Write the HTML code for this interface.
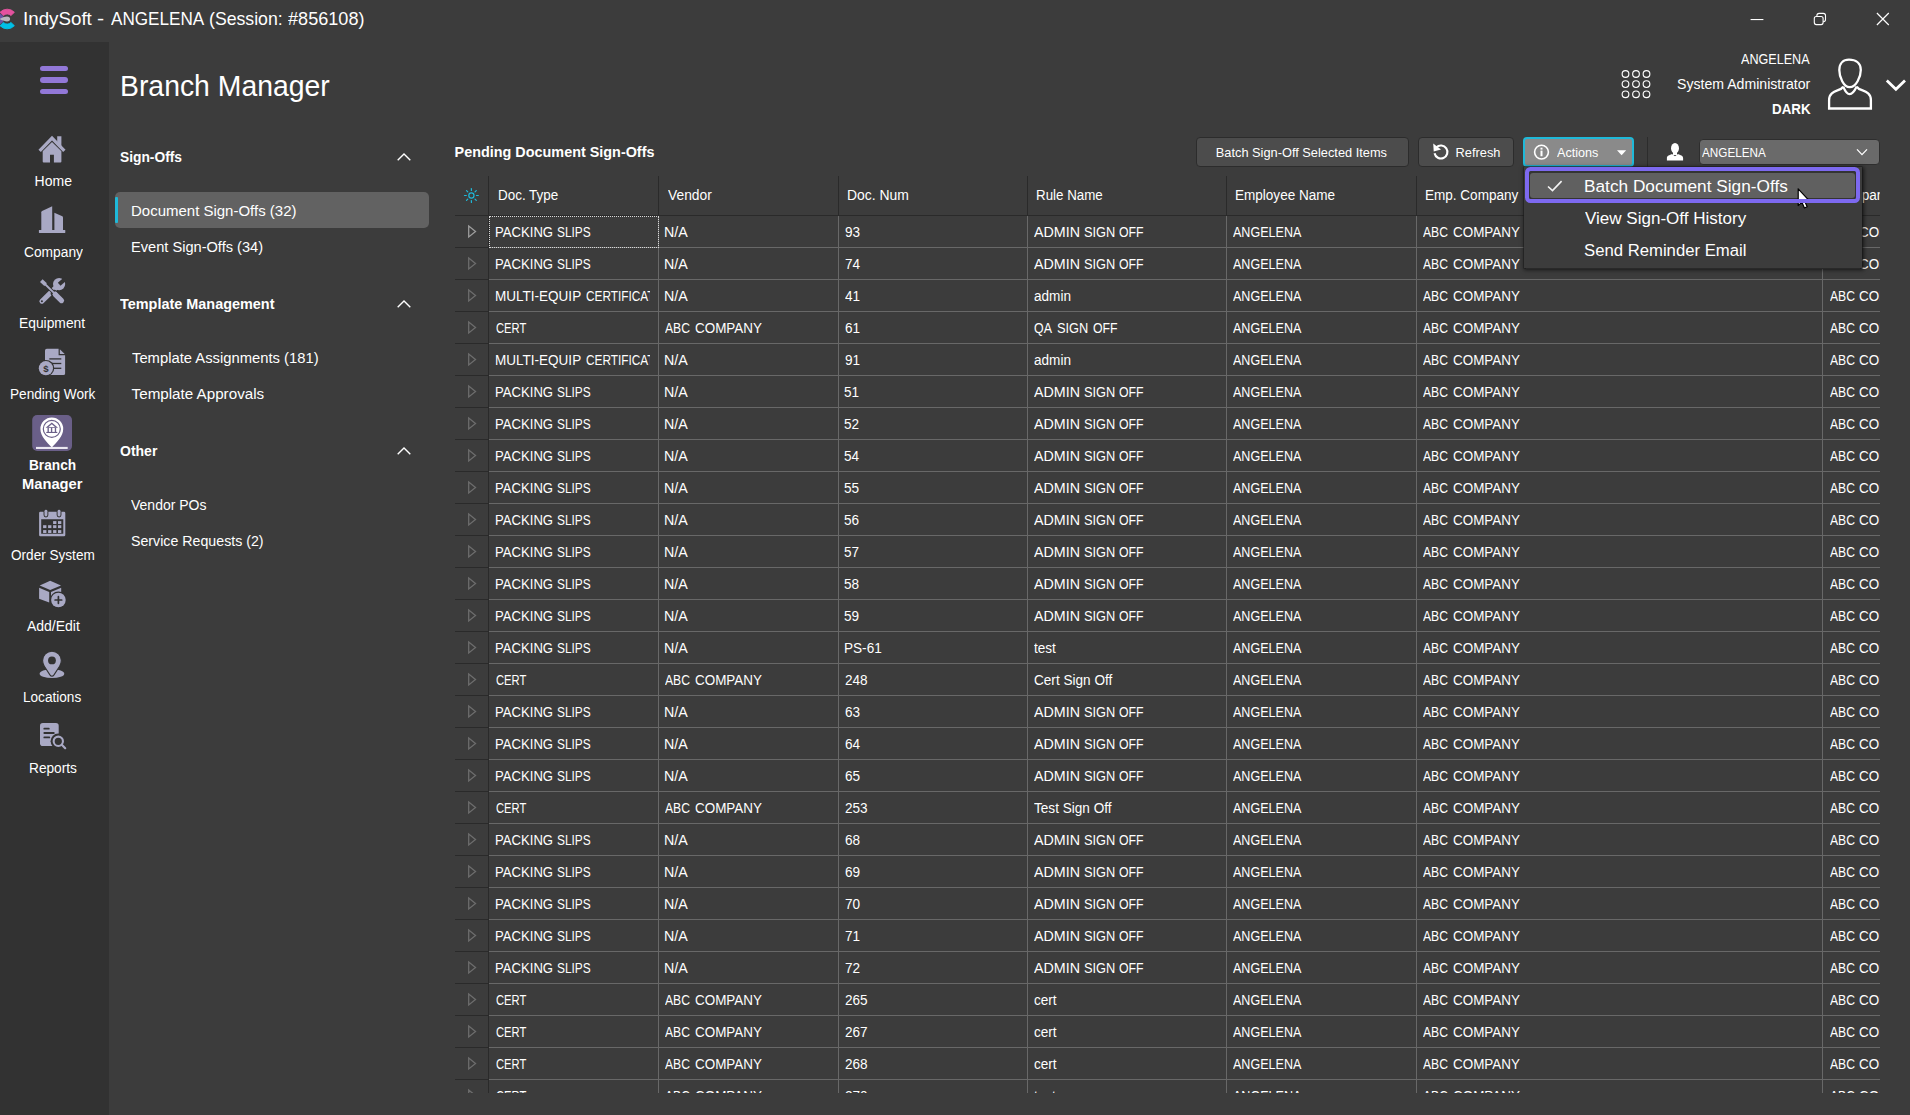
<!DOCTYPE html><html><head><meta charset="utf-8"><title>IndySoft - Branch Manager</title>
<style>html,body{margin:0;padding:0}body{width:1910px;height:1115px;overflow:hidden;position:relative;background:#3c3c3c;font-family:'Liberation Sans',sans-serif;color:#fff}svg{position:absolute;overflow:visible}.g{position:absolute;overflow:hidden}</style></head><body>
<div style="position:absolute;left:0px;top:42px;width:109px;height:1073px;background:#323232;"></div>
<svg style="left:0;top:0" width="24" height="42" viewBox="0 0 24 42"><path d="M0.03 12.32 A9.8 9.8 0 0 1 14.37 12.32 L10.93 15.52 A5.1 5.1 0 0 0 3.47 15.52 Z" fill="#e4529f" stroke="#e4529f" stroke-width="0.9" stroke-linejoin="round"/><path d="M14.37 25.68 A9.8 9.8 0 0 1 0.03 25.68 L3.47 22.48 A5.1 5.1 0 0 0 10.93 22.48 Z" fill="#00c0e6" stroke="#00c0e6" stroke-width="0.9" stroke-linejoin="round"/><path d="M-0.92 24.48 A9.8 9.8 0 0 1 -0.92 13.52 L2.97 16.15 A5.1 5.1 0 0 0 2.97 21.85 Z" fill="#6b55a8" stroke="#6b55a8" stroke-width="0.9" stroke-linejoin="round"/><path d="M-0.5 19 C2.5 17.6 5 16.6 7 16.6 C9 16.6 10.1 17.7 10.1 19 C10.1 20.3 9 21.4 7 21.4 C5 21.4 2.5 20.4 -0.5 19 Z" fill="#b9b8bf"/></svg>
<div style="position:absolute;left:40px;top:65.5px;width:28px;height:5.6px;background:#9278d8;border-radius:3px"></div>
<div style="position:absolute;left:40px;top:77px;width:28px;height:5.6px;background:#9278d8;border-radius:3px"></div>
<div style="position:absolute;left:40px;top:88.8px;width:28px;height:5.6px;background:#9278d8;border-radius:3px"></div>
<svg style="left:0;top:0" width="109" height="800" viewBox="0 0 109 800"><g fill="#a9a9c4"><path d="M57.2 136.2 H61.4 V147 L57.2 142.6 Z"/><path d="M52 141.9 L61.4 151.3 V161.6 Q61.4 162.6 60.4 162.6 H53.9 V154.7 H50 V162.6 H43.7 Q42.7 162.6 42.7 161.6 V151.3 Z"/></g><path d="M39.65 150.8 L52 138.1 L64.35 150.8" fill="none" stroke="#a9a9c4" stroke-width="3.3" stroke-linejoin="miter"/><g fill="#a9a9c4"><rect x="38.9" y="229.9" width="26.4" height="3" rx="0.4"/><path d="M41.3 230.5 V212.3 Q41.3 211.5 42.1 211.1 L52.2 206.2 V230.5 Z"/><path d="M54.4 230.5 V212.8 L62.3 216.3 Q63 216.7 63 217.5 V230.5 Z"/></g><g><path d="M41.9 301.2 L56.6 286.9" stroke="#a9a9c4" stroke-width="5" stroke-linecap="round" fill="none"/><circle cx="59.1" cy="284.1" r="6.1" fill="#a9a9c4"/><path d="M57.85 282.7 L60.55 285.75 L66.5 280.5 L63.8 277.4 Z" fill="#323232"/><circle cx="41.9" cy="301.2" r="1.05" fill="#323232"/><path d="M45 284 L61.5 300.5" stroke="#323232" stroke-width="3.8" fill="none"/><path d="M54.3 293.4 L61.5 300.6" stroke="#323232" stroke-width="7" stroke-linecap="round" fill="none"/><path d="M41.3 280.6 L45.6 284.7" stroke="#a9a9c4" stroke-width="3.7" fill="none"/><path d="M44.6 283.8 L55 293.9" stroke="#a9a9c4" stroke-width="1.9" fill="none"/><path d="M55.2 294.3 L61.5 300.6" stroke="#a9a9c4" stroke-width="5.2" stroke-linecap="round" fill="none"/><path d="M52.6 294.6 L55.8 291.4 L57.6 293.4 L54.6 296.5 Z" fill="#a9a9c4"/></g><path d="M46.8 348.8 H58.6 V355.3 H65.1 V373.4 Q65.1 375 63.5 375 H46.6 Q45 375 45 373.4 V350.6 Q45 348.8 46.8 348.8 Z" fill="#a9a9c4"/><path d="M59.8 349.2 L64.7 354.1 H59.8 Z" fill="#a9a9c4"/><rect x="49.3" y="358.25" width="12" height="1.3" fill="#323232"/><rect x="49.3" y="362.85" width="12" height="1.3" fill="#323232"/><rect x="49.3" y="367.65000000000003" width="12" height="1.3" fill="#323232"/><circle cx="45.9" cy="368.2" r="8.3" fill="#323232"/><circle cx="45.9" cy="368.2" r="7.1" fill="#a9a9c4"/><text x="45.9" y="371.7" text-anchor="middle" font-family="Liberation Sans, sans-serif" font-weight="bold" font-size="9.6" fill="#323232">$</text><rect x="32.2" y="415" width="39.8" height="36" rx="5" fill="#6a5f88"/><path d="M51.8 447.6 C47 442 40.4 436.2 40.4 428.9 A11.4 11.4 0 0 1 63.2 428.9 C63.2 436.2 56.6 442 51.8 447.6 Z" fill="#fff"/><circle cx="51.8" cy="428.9" r="8.5" fill="none" stroke="#6a5f88" stroke-width="1.2"/><path d="M51.8 422.4 L58 427.7 H45.6 Z M51.8 424.3 L48.6 426.9 H55 Z" fill="#6a5f88" fill-rule="evenodd"/><rect x="47.5" y="427.6" width="1.35" height="4.9" fill="#6a5f88"/><rect x="50.9" y="427.6" width="1.35" height="4.9" fill="#6a5f88"/><rect x="54.8" y="427.6" width="1.35" height="4.9" fill="#6a5f88"/><rect x="46.3" y="431.9" width="11" height="1.1" fill="#6a5f88"/><rect x="36" y="446.9" width="31.7" height="2.1" fill="#ebe8f1"/><path d="M40.4 511.8 H64 Q65.3 511.8 65.3 513.1 V534.9 Q65.3 536.2 64 536.2 H40.4 Q39.1 536.2 39.1 534.9 V513.1 Q39.1 511.8 40.4 511.8 Z M41.2 519.3 V533.85 H63.3 V519.3 Z" fill="#a9a9c4" fill-rule="evenodd"/><rect x="43.550000000000004" y="509" width="4.8" height="8.4" rx="2.4" fill="#323232"/><rect x="44.5" y="509.8" width="2.9" height="6.7" rx="1.45" fill="#a9a9c4"/><rect x="56.65" y="509" width="4.8" height="8.4" rx="2.4" fill="#323232"/><rect x="57.599999999999994" y="509.8" width="2.9" height="6.7" rx="1.45" fill="#a9a9c4"/><rect x="53.1" y="521.1" width="3.3" height="2.9" fill="#a9a9c4"/><rect x="58" y="521.1" width="3.3" height="2.9" fill="#a9a9c4"/><rect x="43.1" y="525.2" width="3.3" height="2.9" fill="#a9a9c4"/><rect x="48.1" y="525.2" width="3.3" height="2.9" fill="#a9a9c4"/><rect x="53.1" y="525.2" width="3.3" height="2.9" fill="#a9a9c4"/><rect x="58" y="525.2" width="3.3" height="2.9" fill="#a9a9c4"/><rect x="43.1" y="530.1" width="3.3" height="2.9" fill="#a9a9c4"/><rect x="48.1" y="530.1" width="3.3" height="2.9" fill="#a9a9c4"/><rect x="53.1" y="530.1" width="3.3" height="2.9" fill="#a9a9c4"/><rect x="58" y="530.1" width="3.3" height="2.9" fill="#a9a9c4"/><g fill="#a9a9c4"><path d="M50.2 580.8 L61 585.5 L50.2 590 L39.7 585.5 Z"/><path d="M39.1 587.8 L49.2 592.1 V602.5 L39.1 598.75 Z"/><path d="M51 591.9 L61.2 587.8 V598.8 L51 602.5 Z"/></g><circle cx="58.4" cy="600" r="8.5" fill="#323232"/><circle cx="58.4" cy="600" r="7.3" fill="#a9a9c4"/><path d="M55.1 600 H61.7 M58.4 596.7 V603.3" stroke="#323232" stroke-width="1.7" stroke-linecap="round"/><ellipse cx="51.96" cy="673.7" rx="12.3" ry="4.4" fill="#a9a9c4"/><path d="M51.96 676.2 C51 676.2 50.4 675.6 49.9 674.9 L44.3 666.2 C43.2 664.5 42.6 662.5 42.6 660.6 A9.36 9.36 0 0 1 61.32 660.6 C61.32 662.5 60.7 664.5 59.6 666.2 L54 674.9 C53.5 675.6 52.9 676.2 51.96 676.2 Z" fill="#a9a9c4" stroke="#323232" stroke-width="1.1"/><rect x="40" y="645" width="24" height="20" fill="none"/><circle cx="51.96" cy="660.4" r="3.9" fill="#323232"/><rect x="40" y="723" width="18.7" height="23.1" rx="2.8" fill="#a9a9c4"/><path d="M44.3 728.7 H48.8 M44.3 733 H53.8 M44.3 737.4 H49.3" stroke="#323232" stroke-width="1.8" stroke-linecap="round"/><circle cx="58.3" cy="741.3" r="7.7" fill="#323232"/><path d="M61.6 744.6 L65.3 748.3" stroke="#323232" stroke-width="4.4" stroke-linecap="round"/><circle cx="58.3" cy="741.3" r="4.65" fill="none" stroke="#a9a9c4" stroke-width="2.1"/><path d="M61.8 744.8 L65.2 748.2" stroke="#a9a9c4" stroke-width="2.2" stroke-linecap="round"/></svg>
<svg style="left:0;top:0" width="1910" height="130" viewBox="0 0 1910 130"><rect x="1750.6" y="19" width="12.8" height="1.1" fill="#fff"/><rect x="1816.9" y="13.4" width="8.6" height="8.3" rx="2.2" fill="none" stroke="#fff" stroke-width="1.1"/><rect x="1814.3" y="16.5" width="8.8" height="8.1" rx="2" fill="#3c3c3c" stroke="#fff" stroke-width="1.1"/><path d="M1876.9 13 L1888.8 25 M1888.8 13 L1876.9 25" stroke="#fff" stroke-width="1.15" fill="none"/><circle cx="1625.5" cy="74" r="3.35" fill="none" stroke="#fff" stroke-width="1.15"/><circle cx="1636" cy="74" r="3.35" fill="none" stroke="#fff" stroke-width="1.15"/><circle cx="1646.5" cy="74" r="3.35" fill="none" stroke="#fff" stroke-width="1.15"/><circle cx="1625.5" cy="84.1" r="3.35" fill="none" stroke="#fff" stroke-width="1.15"/><circle cx="1636" cy="84.1" r="3.35" fill="none" stroke="#fff" stroke-width="1.15"/><circle cx="1646.5" cy="84.1" r="3.35" fill="none" stroke="#fff" stroke-width="1.15"/><circle cx="1625.5" cy="94.3" r="3.35" fill="none" stroke="#fff" stroke-width="1.15"/><circle cx="1636" cy="94.3" r="3.35" fill="none" stroke="#fff" stroke-width="1.15"/><circle cx="1646.5" cy="94.3" r="3.35" fill="none" stroke="#fff" stroke-width="1.15"/><g fill="none" stroke="#fff" stroke-width="2.3" stroke-linejoin="miter"><path d="M1849.7 87.2 C1843.6 87.2 1839.3 77 1839.3 70 C1839.3 63 1843.5 59.7 1849 59.7 C1855.5 59.7 1860.8 63 1860.8 70 C1860.8 77 1856 87.2 1849.7 87.2 Z"/><path d="M1843.2 86.6 C1845 91 1847.5 94.2 1849.7 94.2 C1852 94.2 1854.6 91 1856.7 86.6"/><path d="M1843.2 86.6 C1842.2 88.4 1840.5 89.3 1838 90.2 C1833.5 91.8 1829.1 93.5 1829.1 100 L1829.1 108.5 L1870.9 108.5 L1870.9 100 C1870.9 93.5 1866.5 91.8 1862 90.2 C1859.5 89.3 1857.7 88.4 1856.7 86.6"/></g><path d="M1886.8 80.6 L1895.9 89.2 L1905 80.6" fill="none" stroke="#fff" stroke-width="2.8"/></svg>
<div style="position:absolute;left:115px;top:192px;width:314px;height:36px;background:#626262;border-radius:5px"></div>
<div style="position:absolute;left:115px;top:197px;width:3px;height:26px;background:#1fb9d9;border-radius:1px"></div>
<svg style="left:397px;top:152.5px" width="14" height="8" viewBox="0 0 14 8"><path d="M0.7 7.3 L7 1 L13.3 7.3" fill="none" stroke="#fff" stroke-width="1.4"/></svg>
<svg style="left:397px;top:299.5px" width="14" height="8" viewBox="0 0 14 8"><path d="M0.7 7.3 L7 1 L13.3 7.3" fill="none" stroke="#fff" stroke-width="1.4"/></svg>
<svg style="left:397px;top:446.5px" width="14" height="8" viewBox="0 0 14 8"><path d="M0.7 7.3 L7 1 L13.3 7.3" fill="none" stroke="#fff" stroke-width="1.4"/></svg>
<div class="g" style="left:455px;top:170px;width:1425px;height:923px">
<div style="position:absolute;left:34px;top:77px;width:1400px;height:1px;background:#686868;"></div><div style="position:absolute;left:0px;top:77px;width:34px;height:1px;background:#2a2a2a;"></div><div style="position:absolute;left:34px;top:109px;width:1400px;height:1px;background:#686868;"></div><div style="position:absolute;left:0px;top:109px;width:34px;height:1px;background:#2a2a2a;"></div><div style="position:absolute;left:34px;top:141px;width:1400px;height:1px;background:#686868;"></div><div style="position:absolute;left:0px;top:141px;width:34px;height:1px;background:#2a2a2a;"></div><div style="position:absolute;left:34px;top:173px;width:1400px;height:1px;background:#686868;"></div><div style="position:absolute;left:0px;top:173px;width:34px;height:1px;background:#2a2a2a;"></div><div style="position:absolute;left:34px;top:205px;width:1400px;height:1px;background:#686868;"></div><div style="position:absolute;left:0px;top:205px;width:34px;height:1px;background:#2a2a2a;"></div><div style="position:absolute;left:34px;top:237px;width:1400px;height:1px;background:#686868;"></div><div style="position:absolute;left:0px;top:237px;width:34px;height:1px;background:#2a2a2a;"></div><div style="position:absolute;left:34px;top:269px;width:1400px;height:1px;background:#686868;"></div><div style="position:absolute;left:0px;top:269px;width:34px;height:1px;background:#2a2a2a;"></div><div style="position:absolute;left:34px;top:301px;width:1400px;height:1px;background:#686868;"></div><div style="position:absolute;left:0px;top:301px;width:34px;height:1px;background:#2a2a2a;"></div><div style="position:absolute;left:34px;top:333px;width:1400px;height:1px;background:#686868;"></div><div style="position:absolute;left:0px;top:333px;width:34px;height:1px;background:#2a2a2a;"></div><div style="position:absolute;left:34px;top:365px;width:1400px;height:1px;background:#686868;"></div><div style="position:absolute;left:0px;top:365px;width:34px;height:1px;background:#2a2a2a;"></div><div style="position:absolute;left:34px;top:397px;width:1400px;height:1px;background:#686868;"></div><div style="position:absolute;left:0px;top:397px;width:34px;height:1px;background:#2a2a2a;"></div><div style="position:absolute;left:34px;top:429px;width:1400px;height:1px;background:#686868;"></div><div style="position:absolute;left:0px;top:429px;width:34px;height:1px;background:#2a2a2a;"></div><div style="position:absolute;left:34px;top:461px;width:1400px;height:1px;background:#686868;"></div><div style="position:absolute;left:0px;top:461px;width:34px;height:1px;background:#2a2a2a;"></div><div style="position:absolute;left:34px;top:493px;width:1400px;height:1px;background:#686868;"></div><div style="position:absolute;left:0px;top:493px;width:34px;height:1px;background:#2a2a2a;"></div><div style="position:absolute;left:34px;top:525px;width:1400px;height:1px;background:#686868;"></div><div style="position:absolute;left:0px;top:525px;width:34px;height:1px;background:#2a2a2a;"></div><div style="position:absolute;left:34px;top:557px;width:1400px;height:1px;background:#686868;"></div><div style="position:absolute;left:0px;top:557px;width:34px;height:1px;background:#2a2a2a;"></div><div style="position:absolute;left:34px;top:589px;width:1400px;height:1px;background:#686868;"></div><div style="position:absolute;left:0px;top:589px;width:34px;height:1px;background:#2a2a2a;"></div><div style="position:absolute;left:34px;top:621px;width:1400px;height:1px;background:#686868;"></div><div style="position:absolute;left:0px;top:621px;width:34px;height:1px;background:#2a2a2a;"></div><div style="position:absolute;left:34px;top:653px;width:1400px;height:1px;background:#686868;"></div><div style="position:absolute;left:0px;top:653px;width:34px;height:1px;background:#2a2a2a;"></div><div style="position:absolute;left:34px;top:685px;width:1400px;height:1px;background:#686868;"></div><div style="position:absolute;left:0px;top:685px;width:34px;height:1px;background:#2a2a2a;"></div><div style="position:absolute;left:34px;top:717px;width:1400px;height:1px;background:#686868;"></div><div style="position:absolute;left:0px;top:717px;width:34px;height:1px;background:#2a2a2a;"></div><div style="position:absolute;left:34px;top:749px;width:1400px;height:1px;background:#686868;"></div><div style="position:absolute;left:0px;top:749px;width:34px;height:1px;background:#2a2a2a;"></div><div style="position:absolute;left:34px;top:781px;width:1400px;height:1px;background:#686868;"></div><div style="position:absolute;left:0px;top:781px;width:34px;height:1px;background:#2a2a2a;"></div><div style="position:absolute;left:34px;top:813px;width:1400px;height:1px;background:#686868;"></div><div style="position:absolute;left:0px;top:813px;width:34px;height:1px;background:#2a2a2a;"></div><div style="position:absolute;left:34px;top:845px;width:1400px;height:1px;background:#686868;"></div><div style="position:absolute;left:0px;top:845px;width:34px;height:1px;background:#2a2a2a;"></div><div style="position:absolute;left:34px;top:877px;width:1400px;height:1px;background:#686868;"></div><div style="position:absolute;left:0px;top:877px;width:34px;height:1px;background:#2a2a2a;"></div><div style="position:absolute;left:34px;top:909px;width:1400px;height:1px;background:#686868;"></div><div style="position:absolute;left:0px;top:909px;width:34px;height:1px;background:#2a2a2a;"></div><div style="position:absolute;left:34px;top:941px;width:1400px;height:1px;background:#686868;"></div><div style="position:absolute;left:0px;top:941px;width:34px;height:1px;background:#2a2a2a;"></div><div style="position:absolute;left:34px;top:973px;width:1400px;height:1px;background:#686868;"></div><div style="position:absolute;left:0px;top:973px;width:34px;height:1px;background:#2a2a2a;"></div><div style="position:absolute;left:0px;top:45px;width:1430px;height:1px;background:#2a2a2a;"></div><div style="position:absolute;left:203px;top:6px;width:1px;height:39px;background:#2a2a2a;"></div><div style="position:absolute;left:203px;top:46px;width:1px;height:900px;background:#686868;"></div><div style="position:absolute;left:383px;top:6px;width:1px;height:39px;background:#2a2a2a;"></div><div style="position:absolute;left:383px;top:46px;width:1px;height:900px;background:#686868;"></div><div style="position:absolute;left:572px;top:6px;width:1px;height:39px;background:#2a2a2a;"></div><div style="position:absolute;left:572px;top:46px;width:1px;height:900px;background:#686868;"></div><div style="position:absolute;left:771px;top:6px;width:1px;height:39px;background:#2a2a2a;"></div><div style="position:absolute;left:771px;top:46px;width:1px;height:900px;background:#686868;"></div><div style="position:absolute;left:961px;top:6px;width:1px;height:39px;background:#2a2a2a;"></div><div style="position:absolute;left:961px;top:46px;width:1px;height:900px;background:#686868;"></div><div style="position:absolute;left:1367px;top:6px;width:1px;height:39px;background:#2a2a2a;"></div><div style="position:absolute;left:1367px;top:46px;width:1px;height:900px;background:#686868;"></div><div style="position:absolute;left:33px;top:6px;width:1px;height:940px;background:#2a2a2a;"></div><div style="position:absolute;left:34px;top:46px;width:168px;height:30px;border:1px dotted #d8d8d8"></div><svg style="left:13px;top:55.0px" width="9" height="13" viewBox="0 0 9 13"><path d="M0.7 1.1 L7.5 6.5 L0.7 11.9 Z" fill="none" stroke="#9c9c9c" stroke-width="1.3" stroke-linejoin="miter"/></svg><svg style="left:13px;top:87.0px" width="9" height="13" viewBox="0 0 9 13"><path d="M0.7 1.1 L7.5 6.5 L0.7 11.9 Z" fill="none" stroke="#6c6c6c" stroke-width="1.3" stroke-linejoin="miter"/></svg><svg style="left:13px;top:119.0px" width="9" height="13" viewBox="0 0 9 13"><path d="M0.7 1.1 L7.5 6.5 L0.7 11.9 Z" fill="none" stroke="#6c6c6c" stroke-width="1.3" stroke-linejoin="miter"/></svg><svg style="left:13px;top:151.0px" width="9" height="13" viewBox="0 0 9 13"><path d="M0.7 1.1 L7.5 6.5 L0.7 11.9 Z" fill="none" stroke="#6c6c6c" stroke-width="1.3" stroke-linejoin="miter"/></svg><svg style="left:13px;top:183.0px" width="9" height="13" viewBox="0 0 9 13"><path d="M0.7 1.1 L7.5 6.5 L0.7 11.9 Z" fill="none" stroke="#6c6c6c" stroke-width="1.3" stroke-linejoin="miter"/></svg><svg style="left:13px;top:215.0px" width="9" height="13" viewBox="0 0 9 13"><path d="M0.7 1.1 L7.5 6.5 L0.7 11.9 Z" fill="none" stroke="#6c6c6c" stroke-width="1.3" stroke-linejoin="miter"/></svg><svg style="left:13px;top:247.0px" width="9" height="13" viewBox="0 0 9 13"><path d="M0.7 1.1 L7.5 6.5 L0.7 11.9 Z" fill="none" stroke="#6c6c6c" stroke-width="1.3" stroke-linejoin="miter"/></svg><svg style="left:13px;top:279.0px" width="9" height="13" viewBox="0 0 9 13"><path d="M0.7 1.1 L7.5 6.5 L0.7 11.9 Z" fill="none" stroke="#6c6c6c" stroke-width="1.3" stroke-linejoin="miter"/></svg><svg style="left:13px;top:311.0px" width="9" height="13" viewBox="0 0 9 13"><path d="M0.7 1.1 L7.5 6.5 L0.7 11.9 Z" fill="none" stroke="#6c6c6c" stroke-width="1.3" stroke-linejoin="miter"/></svg><svg style="left:13px;top:343.0px" width="9" height="13" viewBox="0 0 9 13"><path d="M0.7 1.1 L7.5 6.5 L0.7 11.9 Z" fill="none" stroke="#6c6c6c" stroke-width="1.3" stroke-linejoin="miter"/></svg><svg style="left:13px;top:375.0px" width="9" height="13" viewBox="0 0 9 13"><path d="M0.7 1.1 L7.5 6.5 L0.7 11.9 Z" fill="none" stroke="#6c6c6c" stroke-width="1.3" stroke-linejoin="miter"/></svg><svg style="left:13px;top:407.0px" width="9" height="13" viewBox="0 0 9 13"><path d="M0.7 1.1 L7.5 6.5 L0.7 11.9 Z" fill="none" stroke="#6c6c6c" stroke-width="1.3" stroke-linejoin="miter"/></svg><svg style="left:13px;top:439.0px" width="9" height="13" viewBox="0 0 9 13"><path d="M0.7 1.1 L7.5 6.5 L0.7 11.9 Z" fill="none" stroke="#6c6c6c" stroke-width="1.3" stroke-linejoin="miter"/></svg><svg style="left:13px;top:471.0px" width="9" height="13" viewBox="0 0 9 13"><path d="M0.7 1.1 L7.5 6.5 L0.7 11.9 Z" fill="none" stroke="#6c6c6c" stroke-width="1.3" stroke-linejoin="miter"/></svg><svg style="left:13px;top:503.0px" width="9" height="13" viewBox="0 0 9 13"><path d="M0.7 1.1 L7.5 6.5 L0.7 11.9 Z" fill="none" stroke="#6c6c6c" stroke-width="1.3" stroke-linejoin="miter"/></svg><svg style="left:13px;top:535.0px" width="9" height="13" viewBox="0 0 9 13"><path d="M0.7 1.1 L7.5 6.5 L0.7 11.9 Z" fill="none" stroke="#6c6c6c" stroke-width="1.3" stroke-linejoin="miter"/></svg><svg style="left:13px;top:567.0px" width="9" height="13" viewBox="0 0 9 13"><path d="M0.7 1.1 L7.5 6.5 L0.7 11.9 Z" fill="none" stroke="#6c6c6c" stroke-width="1.3" stroke-linejoin="miter"/></svg><svg style="left:13px;top:599.0px" width="9" height="13" viewBox="0 0 9 13"><path d="M0.7 1.1 L7.5 6.5 L0.7 11.9 Z" fill="none" stroke="#6c6c6c" stroke-width="1.3" stroke-linejoin="miter"/></svg><svg style="left:13px;top:631.0px" width="9" height="13" viewBox="0 0 9 13"><path d="M0.7 1.1 L7.5 6.5 L0.7 11.9 Z" fill="none" stroke="#6c6c6c" stroke-width="1.3" stroke-linejoin="miter"/></svg><svg style="left:13px;top:663.0px" width="9" height="13" viewBox="0 0 9 13"><path d="M0.7 1.1 L7.5 6.5 L0.7 11.9 Z" fill="none" stroke="#6c6c6c" stroke-width="1.3" stroke-linejoin="miter"/></svg><svg style="left:13px;top:695.0px" width="9" height="13" viewBox="0 0 9 13"><path d="M0.7 1.1 L7.5 6.5 L0.7 11.9 Z" fill="none" stroke="#6c6c6c" stroke-width="1.3" stroke-linejoin="miter"/></svg><svg style="left:13px;top:727.0px" width="9" height="13" viewBox="0 0 9 13"><path d="M0.7 1.1 L7.5 6.5 L0.7 11.9 Z" fill="none" stroke="#6c6c6c" stroke-width="1.3" stroke-linejoin="miter"/></svg><svg style="left:13px;top:759.0px" width="9" height="13" viewBox="0 0 9 13"><path d="M0.7 1.1 L7.5 6.5 L0.7 11.9 Z" fill="none" stroke="#6c6c6c" stroke-width="1.3" stroke-linejoin="miter"/></svg><svg style="left:13px;top:791.0px" width="9" height="13" viewBox="0 0 9 13"><path d="M0.7 1.1 L7.5 6.5 L0.7 11.9 Z" fill="none" stroke="#6c6c6c" stroke-width="1.3" stroke-linejoin="miter"/></svg><svg style="left:13px;top:823.0px" width="9" height="13" viewBox="0 0 9 13"><path d="M0.7 1.1 L7.5 6.5 L0.7 11.9 Z" fill="none" stroke="#6c6c6c" stroke-width="1.3" stroke-linejoin="miter"/></svg><svg style="left:13px;top:855.0px" width="9" height="13" viewBox="0 0 9 13"><path d="M0.7 1.1 L7.5 6.5 L0.7 11.9 Z" fill="none" stroke="#6c6c6c" stroke-width="1.3" stroke-linejoin="miter"/></svg><svg style="left:13px;top:887.0px" width="9" height="13" viewBox="0 0 9 13"><path d="M0.7 1.1 L7.5 6.5 L0.7 11.9 Z" fill="none" stroke="#6c6c6c" stroke-width="1.3" stroke-linejoin="miter"/></svg><svg style="left:13px;top:919.0px" width="9" height="13" viewBox="0 0 9 13"><path d="M0.7 1.1 L7.5 6.5 L0.7 11.9 Z" fill="none" stroke="#6c6c6c" stroke-width="1.3" stroke-linejoin="miter"/></svg><svg style="left:0;top:0" width="40" height="45" viewBox="0 0 40 45"><circle cx="16.399999999999977" cy="25.5" r="2.6" fill="none" stroke="#1fb9d9" stroke-width="1.2"/><path d="M21.50 25.50 L23.30 25.50" stroke="#1fb9d9" stroke-width="1.2" stroke-linecap="round"/><path d="M20.01 29.11 L21.28 30.38" stroke="#1fb9d9" stroke-width="1.2" stroke-linecap="round"/><path d="M16.40 30.60 L16.40 32.40" stroke="#1fb9d9" stroke-width="1.2" stroke-linecap="round"/><path d="M12.79 29.11 L11.52 30.38" stroke="#1fb9d9" stroke-width="1.2" stroke-linecap="round"/><path d="M11.30 25.50 L9.50 25.50" stroke="#1fb9d9" stroke-width="1.2" stroke-linecap="round"/><path d="M12.79 21.89 L11.52 20.62" stroke="#1fb9d9" stroke-width="1.2" stroke-linecap="round"/><path d="M16.40 20.40 L16.40 18.60" stroke="#1fb9d9" stroke-width="1.2" stroke-linecap="round"/><path d="M20.01 21.89 L21.28 20.62" stroke="#1fb9d9" stroke-width="1.2" stroke-linecap="round"/></svg>
<span style="position:absolute;white-space:nowrap;font-size:14px;line-height:20px;color:#fff;transform:scaleX(0.9597);transform-origin:0 0;left:42.54px;top:15.00px;">Doc. Type</span>
<span style="position:absolute;white-space:nowrap;font-size:14px;line-height:20px;color:#fff;transform:scaleX(0.9867);transform-origin:0 0;left:213.20px;top:15.00px;">Vendor</span>
<span style="position:absolute;white-space:nowrap;font-size:14px;line-height:20px;color:#fff;transform:scaleX(0.9934);transform-origin:0 0;left:392.01px;top:15.00px;">Doc. Num</span>
<span style="position:absolute;white-space:nowrap;font-size:14px;line-height:20px;color:#fff;transform:scaleX(0.9536);transform-origin:0 0;left:581.05px;top:15.00px;">Rule Name</span>
<span style="position:absolute;white-space:nowrap;font-size:14px;line-height:20px;color:#fff;transform:scaleX(0.9667);transform-origin:0 0;left:780.23px;top:15.00px;">Employee Name</span>
<span style="position:absolute;white-space:nowrap;font-size:14px;line-height:20px;color:#fff;transform:scaleX(0.9667);transform-origin:0 0;left:970.03px;top:15.00px;">Emp. Company</span>
<span style="position:absolute;white-space:nowrap;font-size:14px;line-height:20px;color:#fff;transform:scaleX(0.9700);transform-origin:0 0;left:1378.00px;top:15.00px;">Company</span>
<span style="position:absolute;white-space:nowrap;font-size:14px;line-height:20px;color:#fff;transform:scaleX(1.0174);transform-origin:0 0;left:209.38px;top:52.00px;">N/A</span>
<span style="position:absolute;white-space:nowrap;font-size:14px;line-height:20px;color:#fff;transform:scaleX(0.9700);transform-origin:0 0;left:389.60px;top:52.00px;">93</span>
<span style="position:absolute;white-space:nowrap;font-size:14px;line-height:20px;color:#fff;transform:scaleX(1.0182);transform-origin:0 0;left:579.10px;top:52.00px;">ADMIN</span>
<span style="position:absolute;white-space:nowrap;font-size:14px;line-height:20px;color:#fff;transform:scaleX(0.9156);transform-origin:0 0;left:628.58px;top:52.00px;">SIGN</span>
<span style="position:absolute;white-space:nowrap;font-size:14px;line-height:20px;color:#fff;transform:scaleX(0.8786);transform-origin:0 0;left:664.10px;top:52.00px;">OFF</span>
<span style="position:absolute;white-space:nowrap;font-size:14px;line-height:20px;color:#fff;transform:scaleX(0.8961);transform-origin:0 0;left:778.30px;top:52.00px;">ANGELENA</span>
<span style="position:absolute;white-space:nowrap;font-size:14px;line-height:20px;color:#fff;transform:scaleX(0.8679);transform-origin:0 0;left:968.30px;top:52.00px;">ABC</span>
<span style="position:absolute;white-space:nowrap;font-size:14px;line-height:20px;color:#fff;transform:scaleX(0.9600);transform-origin:0 0;left:998.20px;top:52.00px;">COMPANY</span>
<span style="position:absolute;white-space:nowrap;font-size:14px;line-height:20px;color:#fff;transform:scaleX(0.8679);transform-origin:0 0;left:1374.50px;top:52.00px;">ABC</span>
<span style="position:absolute;white-space:nowrap;font-size:14px;line-height:20px;color:#fff;transform:scaleX(0.9600);transform-origin:0 0;left:1404.40px;top:52.00px;">COMPANY</span>
<span style="position:absolute;white-space:nowrap;font-size:14px;line-height:20px;color:#fff;transform:scaleX(1.0174);transform-origin:0 0;left:209.38px;top:84.00px;">N/A</span>
<span style="position:absolute;white-space:nowrap;font-size:14px;line-height:20px;color:#fff;transform:scaleX(0.9700);transform-origin:0 0;left:389.60px;top:84.00px;">74</span>
<span style="position:absolute;white-space:nowrap;font-size:14px;line-height:20px;color:#fff;transform:scaleX(1.0182);transform-origin:0 0;left:579.10px;top:84.00px;">ADMIN</span>
<span style="position:absolute;white-space:nowrap;font-size:14px;line-height:20px;color:#fff;transform:scaleX(0.9156);transform-origin:0 0;left:628.58px;top:84.00px;">SIGN</span>
<span style="position:absolute;white-space:nowrap;font-size:14px;line-height:20px;color:#fff;transform:scaleX(0.8786);transform-origin:0 0;left:664.10px;top:84.00px;">OFF</span>
<span style="position:absolute;white-space:nowrap;font-size:14px;line-height:20px;color:#fff;transform:scaleX(0.8961);transform-origin:0 0;left:778.30px;top:84.00px;">ANGELENA</span>
<span style="position:absolute;white-space:nowrap;font-size:14px;line-height:20px;color:#fff;transform:scaleX(0.8679);transform-origin:0 0;left:968.30px;top:84.00px;">ABC</span>
<span style="position:absolute;white-space:nowrap;font-size:14px;line-height:20px;color:#fff;transform:scaleX(0.9600);transform-origin:0 0;left:998.20px;top:84.00px;">COMPANY</span>
<span style="position:absolute;white-space:nowrap;font-size:14px;line-height:20px;color:#fff;transform:scaleX(0.8679);transform-origin:0 0;left:1374.50px;top:84.00px;">ABC</span>
<span style="position:absolute;white-space:nowrap;font-size:14px;line-height:20px;color:#fff;transform:scaleX(0.9600);transform-origin:0 0;left:1404.40px;top:84.00px;">COMPANY</span>
<span style="position:absolute;white-space:nowrap;font-size:14px;line-height:20px;color:#fff;transform:scaleX(1.0174);transform-origin:0 0;left:209.38px;top:116.00px;">N/A</span>
<span style="position:absolute;white-space:nowrap;font-size:14px;line-height:20px;color:#fff;transform:scaleX(0.9700);transform-origin:0 0;left:389.60px;top:116.00px;">41</span>
<span style="position:absolute;white-space:nowrap;font-size:14px;line-height:20px;color:#fff;transform:scaleX(0.9700);transform-origin:0 0;left:579.10px;top:116.00px;">admin</span>
<span style="position:absolute;white-space:nowrap;font-size:14px;line-height:20px;color:#fff;transform:scaleX(0.8961);transform-origin:0 0;left:778.30px;top:116.00px;">ANGELENA</span>
<span style="position:absolute;white-space:nowrap;font-size:14px;line-height:20px;color:#fff;transform:scaleX(0.8679);transform-origin:0 0;left:968.30px;top:116.00px;">ABC</span>
<span style="position:absolute;white-space:nowrap;font-size:14px;line-height:20px;color:#fff;transform:scaleX(0.9600);transform-origin:0 0;left:998.20px;top:116.00px;">COMPANY</span>
<span style="position:absolute;white-space:nowrap;font-size:14px;line-height:20px;color:#fff;transform:scaleX(0.8679);transform-origin:0 0;left:1374.50px;top:116.00px;">ABC</span>
<span style="position:absolute;white-space:nowrap;font-size:14px;line-height:20px;color:#fff;transform:scaleX(0.9600);transform-origin:0 0;left:1404.40px;top:116.00px;">COMPANY</span>
<span style="position:absolute;white-space:nowrap;font-size:14px;line-height:20px;color:#fff;transform:scaleX(0.8679);transform-origin:0 0;left:210.40px;top:148.00px;">ABC</span>
<span style="position:absolute;white-space:nowrap;font-size:14px;line-height:20px;color:#fff;transform:scaleX(0.9600);transform-origin:0 0;left:240.30px;top:148.00px;">COMPANY</span>
<span style="position:absolute;white-space:nowrap;font-size:14px;line-height:20px;color:#fff;transform:scaleX(0.9700);transform-origin:0 0;left:389.60px;top:148.00px;">61</span>
<span style="position:absolute;white-space:nowrap;font-size:14px;line-height:20px;color:#fff;transform:scaleX(0.8857);transform-origin:0 0;left:579.10px;top:148.00px;">QA</span>
<span style="position:absolute;white-space:nowrap;font-size:14px;line-height:20px;color:#fff;transform:scaleX(0.9156);transform-origin:0 0;left:602.38px;top:148.00px;">SIGN</span>
<span style="position:absolute;white-space:nowrap;font-size:14px;line-height:20px;color:#fff;transform:scaleX(0.8786);transform-origin:0 0;left:638.00px;top:148.00px;">OFF</span>
<span style="position:absolute;white-space:nowrap;font-size:14px;line-height:20px;color:#fff;transform:scaleX(0.8961);transform-origin:0 0;left:778.30px;top:148.00px;">ANGELENA</span>
<span style="position:absolute;white-space:nowrap;font-size:14px;line-height:20px;color:#fff;transform:scaleX(0.8679);transform-origin:0 0;left:968.30px;top:148.00px;">ABC</span>
<span style="position:absolute;white-space:nowrap;font-size:14px;line-height:20px;color:#fff;transform:scaleX(0.9600);transform-origin:0 0;left:998.20px;top:148.00px;">COMPANY</span>
<span style="position:absolute;white-space:nowrap;font-size:14px;line-height:20px;color:#fff;transform:scaleX(0.8679);transform-origin:0 0;left:1374.50px;top:148.00px;">ABC</span>
<span style="position:absolute;white-space:nowrap;font-size:14px;line-height:20px;color:#fff;transform:scaleX(0.9600);transform-origin:0 0;left:1404.40px;top:148.00px;">COMPANY</span>
<span style="position:absolute;white-space:nowrap;font-size:14px;line-height:20px;color:#fff;transform:scaleX(1.0174);transform-origin:0 0;left:209.38px;top:180.00px;">N/A</span>
<span style="position:absolute;white-space:nowrap;font-size:14px;line-height:20px;color:#fff;transform:scaleX(0.9700);transform-origin:0 0;left:389.60px;top:180.00px;">91</span>
<span style="position:absolute;white-space:nowrap;font-size:14px;line-height:20px;color:#fff;transform:scaleX(0.9700);transform-origin:0 0;left:579.10px;top:180.00px;">admin</span>
<span style="position:absolute;white-space:nowrap;font-size:14px;line-height:20px;color:#fff;transform:scaleX(0.8961);transform-origin:0 0;left:778.30px;top:180.00px;">ANGELENA</span>
<span style="position:absolute;white-space:nowrap;font-size:14px;line-height:20px;color:#fff;transform:scaleX(0.8679);transform-origin:0 0;left:968.30px;top:180.00px;">ABC</span>
<span style="position:absolute;white-space:nowrap;font-size:14px;line-height:20px;color:#fff;transform:scaleX(0.9600);transform-origin:0 0;left:998.20px;top:180.00px;">COMPANY</span>
<span style="position:absolute;white-space:nowrap;font-size:14px;line-height:20px;color:#fff;transform:scaleX(0.8679);transform-origin:0 0;left:1374.50px;top:180.00px;">ABC</span>
<span style="position:absolute;white-space:nowrap;font-size:14px;line-height:20px;color:#fff;transform:scaleX(0.9600);transform-origin:0 0;left:1404.40px;top:180.00px;">COMPANY</span>
<span style="position:absolute;white-space:nowrap;font-size:14px;line-height:20px;color:#fff;transform:scaleX(1.0174);transform-origin:0 0;left:209.38px;top:212.00px;">N/A</span>
<span style="position:absolute;white-space:nowrap;font-size:14px;line-height:20px;color:#fff;transform:scaleX(0.9700);transform-origin:0 0;left:388.63px;top:212.00px;">51</span>
<span style="position:absolute;white-space:nowrap;font-size:14px;line-height:20px;color:#fff;transform:scaleX(1.0182);transform-origin:0 0;left:579.10px;top:212.00px;">ADMIN</span>
<span style="position:absolute;white-space:nowrap;font-size:14px;line-height:20px;color:#fff;transform:scaleX(0.9156);transform-origin:0 0;left:628.58px;top:212.00px;">SIGN</span>
<span style="position:absolute;white-space:nowrap;font-size:14px;line-height:20px;color:#fff;transform:scaleX(0.8786);transform-origin:0 0;left:664.10px;top:212.00px;">OFF</span>
<span style="position:absolute;white-space:nowrap;font-size:14px;line-height:20px;color:#fff;transform:scaleX(0.8961);transform-origin:0 0;left:778.30px;top:212.00px;">ANGELENA</span>
<span style="position:absolute;white-space:nowrap;font-size:14px;line-height:20px;color:#fff;transform:scaleX(0.8679);transform-origin:0 0;left:968.30px;top:212.00px;">ABC</span>
<span style="position:absolute;white-space:nowrap;font-size:14px;line-height:20px;color:#fff;transform:scaleX(0.9600);transform-origin:0 0;left:998.20px;top:212.00px;">COMPANY</span>
<span style="position:absolute;white-space:nowrap;font-size:14px;line-height:20px;color:#fff;transform:scaleX(0.8679);transform-origin:0 0;left:1374.50px;top:212.00px;">ABC</span>
<span style="position:absolute;white-space:nowrap;font-size:14px;line-height:20px;color:#fff;transform:scaleX(0.9600);transform-origin:0 0;left:1404.40px;top:212.00px;">COMPANY</span>
<span style="position:absolute;white-space:nowrap;font-size:14px;line-height:20px;color:#fff;transform:scaleX(1.0174);transform-origin:0 0;left:209.38px;top:244.00px;">N/A</span>
<span style="position:absolute;white-space:nowrap;font-size:14px;line-height:20px;color:#fff;transform:scaleX(0.9700);transform-origin:0 0;left:388.63px;top:244.00px;">52</span>
<span style="position:absolute;white-space:nowrap;font-size:14px;line-height:20px;color:#fff;transform:scaleX(1.0182);transform-origin:0 0;left:579.10px;top:244.00px;">ADMIN</span>
<span style="position:absolute;white-space:nowrap;font-size:14px;line-height:20px;color:#fff;transform:scaleX(0.9156);transform-origin:0 0;left:628.58px;top:244.00px;">SIGN</span>
<span style="position:absolute;white-space:nowrap;font-size:14px;line-height:20px;color:#fff;transform:scaleX(0.8786);transform-origin:0 0;left:664.10px;top:244.00px;">OFF</span>
<span style="position:absolute;white-space:nowrap;font-size:14px;line-height:20px;color:#fff;transform:scaleX(0.8961);transform-origin:0 0;left:778.30px;top:244.00px;">ANGELENA</span>
<span style="position:absolute;white-space:nowrap;font-size:14px;line-height:20px;color:#fff;transform:scaleX(0.8679);transform-origin:0 0;left:968.30px;top:244.00px;">ABC</span>
<span style="position:absolute;white-space:nowrap;font-size:14px;line-height:20px;color:#fff;transform:scaleX(0.9600);transform-origin:0 0;left:998.20px;top:244.00px;">COMPANY</span>
<span style="position:absolute;white-space:nowrap;font-size:14px;line-height:20px;color:#fff;transform:scaleX(0.8679);transform-origin:0 0;left:1374.50px;top:244.00px;">ABC</span>
<span style="position:absolute;white-space:nowrap;font-size:14px;line-height:20px;color:#fff;transform:scaleX(0.9600);transform-origin:0 0;left:1404.40px;top:244.00px;">COMPANY</span>
<span style="position:absolute;white-space:nowrap;font-size:14px;line-height:20px;color:#fff;transform:scaleX(1.0174);transform-origin:0 0;left:209.38px;top:276.00px;">N/A</span>
<span style="position:absolute;white-space:nowrap;font-size:14px;line-height:20px;color:#fff;transform:scaleX(0.9700);transform-origin:0 0;left:388.63px;top:276.00px;">54</span>
<span style="position:absolute;white-space:nowrap;font-size:14px;line-height:20px;color:#fff;transform:scaleX(1.0182);transform-origin:0 0;left:579.10px;top:276.00px;">ADMIN</span>
<span style="position:absolute;white-space:nowrap;font-size:14px;line-height:20px;color:#fff;transform:scaleX(0.9156);transform-origin:0 0;left:628.58px;top:276.00px;">SIGN</span>
<span style="position:absolute;white-space:nowrap;font-size:14px;line-height:20px;color:#fff;transform:scaleX(0.8786);transform-origin:0 0;left:664.10px;top:276.00px;">OFF</span>
<span style="position:absolute;white-space:nowrap;font-size:14px;line-height:20px;color:#fff;transform:scaleX(0.8961);transform-origin:0 0;left:778.30px;top:276.00px;">ANGELENA</span>
<span style="position:absolute;white-space:nowrap;font-size:14px;line-height:20px;color:#fff;transform:scaleX(0.8679);transform-origin:0 0;left:968.30px;top:276.00px;">ABC</span>
<span style="position:absolute;white-space:nowrap;font-size:14px;line-height:20px;color:#fff;transform:scaleX(0.9600);transform-origin:0 0;left:998.20px;top:276.00px;">COMPANY</span>
<span style="position:absolute;white-space:nowrap;font-size:14px;line-height:20px;color:#fff;transform:scaleX(0.8679);transform-origin:0 0;left:1374.50px;top:276.00px;">ABC</span>
<span style="position:absolute;white-space:nowrap;font-size:14px;line-height:20px;color:#fff;transform:scaleX(0.9600);transform-origin:0 0;left:1404.40px;top:276.00px;">COMPANY</span>
<span style="position:absolute;white-space:nowrap;font-size:14px;line-height:20px;color:#fff;transform:scaleX(1.0174);transform-origin:0 0;left:209.38px;top:308.00px;">N/A</span>
<span style="position:absolute;white-space:nowrap;font-size:14px;line-height:20px;color:#fff;transform:scaleX(0.9700);transform-origin:0 0;left:388.63px;top:308.00px;">55</span>
<span style="position:absolute;white-space:nowrap;font-size:14px;line-height:20px;color:#fff;transform:scaleX(1.0182);transform-origin:0 0;left:579.10px;top:308.00px;">ADMIN</span>
<span style="position:absolute;white-space:nowrap;font-size:14px;line-height:20px;color:#fff;transform:scaleX(0.9156);transform-origin:0 0;left:628.58px;top:308.00px;">SIGN</span>
<span style="position:absolute;white-space:nowrap;font-size:14px;line-height:20px;color:#fff;transform:scaleX(0.8786);transform-origin:0 0;left:664.10px;top:308.00px;">OFF</span>
<span style="position:absolute;white-space:nowrap;font-size:14px;line-height:20px;color:#fff;transform:scaleX(0.8961);transform-origin:0 0;left:778.30px;top:308.00px;">ANGELENA</span>
<span style="position:absolute;white-space:nowrap;font-size:14px;line-height:20px;color:#fff;transform:scaleX(0.8679);transform-origin:0 0;left:968.30px;top:308.00px;">ABC</span>
<span style="position:absolute;white-space:nowrap;font-size:14px;line-height:20px;color:#fff;transform:scaleX(0.9600);transform-origin:0 0;left:998.20px;top:308.00px;">COMPANY</span>
<span style="position:absolute;white-space:nowrap;font-size:14px;line-height:20px;color:#fff;transform:scaleX(0.8679);transform-origin:0 0;left:1374.50px;top:308.00px;">ABC</span>
<span style="position:absolute;white-space:nowrap;font-size:14px;line-height:20px;color:#fff;transform:scaleX(0.9600);transform-origin:0 0;left:1404.40px;top:308.00px;">COMPANY</span>
<span style="position:absolute;white-space:nowrap;font-size:14px;line-height:20px;color:#fff;transform:scaleX(1.0174);transform-origin:0 0;left:209.38px;top:340.00px;">N/A</span>
<span style="position:absolute;white-space:nowrap;font-size:14px;line-height:20px;color:#fff;transform:scaleX(0.9700);transform-origin:0 0;left:388.63px;top:340.00px;">56</span>
<span style="position:absolute;white-space:nowrap;font-size:14px;line-height:20px;color:#fff;transform:scaleX(1.0182);transform-origin:0 0;left:579.10px;top:340.00px;">ADMIN</span>
<span style="position:absolute;white-space:nowrap;font-size:14px;line-height:20px;color:#fff;transform:scaleX(0.9156);transform-origin:0 0;left:628.58px;top:340.00px;">SIGN</span>
<span style="position:absolute;white-space:nowrap;font-size:14px;line-height:20px;color:#fff;transform:scaleX(0.8786);transform-origin:0 0;left:664.10px;top:340.00px;">OFF</span>
<span style="position:absolute;white-space:nowrap;font-size:14px;line-height:20px;color:#fff;transform:scaleX(0.8961);transform-origin:0 0;left:778.30px;top:340.00px;">ANGELENA</span>
<span style="position:absolute;white-space:nowrap;font-size:14px;line-height:20px;color:#fff;transform:scaleX(0.8679);transform-origin:0 0;left:968.30px;top:340.00px;">ABC</span>
<span style="position:absolute;white-space:nowrap;font-size:14px;line-height:20px;color:#fff;transform:scaleX(0.9600);transform-origin:0 0;left:998.20px;top:340.00px;">COMPANY</span>
<span style="position:absolute;white-space:nowrap;font-size:14px;line-height:20px;color:#fff;transform:scaleX(0.8679);transform-origin:0 0;left:1374.50px;top:340.00px;">ABC</span>
<span style="position:absolute;white-space:nowrap;font-size:14px;line-height:20px;color:#fff;transform:scaleX(0.9600);transform-origin:0 0;left:1404.40px;top:340.00px;">COMPANY</span>
<span style="position:absolute;white-space:nowrap;font-size:14px;line-height:20px;color:#fff;transform:scaleX(1.0174);transform-origin:0 0;left:209.38px;top:372.00px;">N/A</span>
<span style="position:absolute;white-space:nowrap;font-size:14px;line-height:20px;color:#fff;transform:scaleX(0.9700);transform-origin:0 0;left:388.63px;top:372.00px;">57</span>
<span style="position:absolute;white-space:nowrap;font-size:14px;line-height:20px;color:#fff;transform:scaleX(1.0182);transform-origin:0 0;left:579.10px;top:372.00px;">ADMIN</span>
<span style="position:absolute;white-space:nowrap;font-size:14px;line-height:20px;color:#fff;transform:scaleX(0.9156);transform-origin:0 0;left:628.58px;top:372.00px;">SIGN</span>
<span style="position:absolute;white-space:nowrap;font-size:14px;line-height:20px;color:#fff;transform:scaleX(0.8786);transform-origin:0 0;left:664.10px;top:372.00px;">OFF</span>
<span style="position:absolute;white-space:nowrap;font-size:14px;line-height:20px;color:#fff;transform:scaleX(0.8961);transform-origin:0 0;left:778.30px;top:372.00px;">ANGELENA</span>
<span style="position:absolute;white-space:nowrap;font-size:14px;line-height:20px;color:#fff;transform:scaleX(0.8679);transform-origin:0 0;left:968.30px;top:372.00px;">ABC</span>
<span style="position:absolute;white-space:nowrap;font-size:14px;line-height:20px;color:#fff;transform:scaleX(0.9600);transform-origin:0 0;left:998.20px;top:372.00px;">COMPANY</span>
<span style="position:absolute;white-space:nowrap;font-size:14px;line-height:20px;color:#fff;transform:scaleX(0.8679);transform-origin:0 0;left:1374.50px;top:372.00px;">ABC</span>
<span style="position:absolute;white-space:nowrap;font-size:14px;line-height:20px;color:#fff;transform:scaleX(0.9600);transform-origin:0 0;left:1404.40px;top:372.00px;">COMPANY</span>
<span style="position:absolute;white-space:nowrap;font-size:14px;line-height:20px;color:#fff;transform:scaleX(1.0174);transform-origin:0 0;left:209.38px;top:404.00px;">N/A</span>
<span style="position:absolute;white-space:nowrap;font-size:14px;line-height:20px;color:#fff;transform:scaleX(0.9700);transform-origin:0 0;left:388.63px;top:404.00px;">58</span>
<span style="position:absolute;white-space:nowrap;font-size:14px;line-height:20px;color:#fff;transform:scaleX(1.0182);transform-origin:0 0;left:579.10px;top:404.00px;">ADMIN</span>
<span style="position:absolute;white-space:nowrap;font-size:14px;line-height:20px;color:#fff;transform:scaleX(0.9156);transform-origin:0 0;left:628.58px;top:404.00px;">SIGN</span>
<span style="position:absolute;white-space:nowrap;font-size:14px;line-height:20px;color:#fff;transform:scaleX(0.8786);transform-origin:0 0;left:664.10px;top:404.00px;">OFF</span>
<span style="position:absolute;white-space:nowrap;font-size:14px;line-height:20px;color:#fff;transform:scaleX(0.8961);transform-origin:0 0;left:778.30px;top:404.00px;">ANGELENA</span>
<span style="position:absolute;white-space:nowrap;font-size:14px;line-height:20px;color:#fff;transform:scaleX(0.8679);transform-origin:0 0;left:968.30px;top:404.00px;">ABC</span>
<span style="position:absolute;white-space:nowrap;font-size:14px;line-height:20px;color:#fff;transform:scaleX(0.9600);transform-origin:0 0;left:998.20px;top:404.00px;">COMPANY</span>
<span style="position:absolute;white-space:nowrap;font-size:14px;line-height:20px;color:#fff;transform:scaleX(0.8679);transform-origin:0 0;left:1374.50px;top:404.00px;">ABC</span>
<span style="position:absolute;white-space:nowrap;font-size:14px;line-height:20px;color:#fff;transform:scaleX(0.9600);transform-origin:0 0;left:1404.40px;top:404.00px;">COMPANY</span>
<span style="position:absolute;white-space:nowrap;font-size:14px;line-height:20px;color:#fff;transform:scaleX(1.0174);transform-origin:0 0;left:209.38px;top:436.00px;">N/A</span>
<span style="position:absolute;white-space:nowrap;font-size:14px;line-height:20px;color:#fff;transform:scaleX(0.9700);transform-origin:0 0;left:388.63px;top:436.00px;">59</span>
<span style="position:absolute;white-space:nowrap;font-size:14px;line-height:20px;color:#fff;transform:scaleX(1.0182);transform-origin:0 0;left:579.10px;top:436.00px;">ADMIN</span>
<span style="position:absolute;white-space:nowrap;font-size:14px;line-height:20px;color:#fff;transform:scaleX(0.9156);transform-origin:0 0;left:628.58px;top:436.00px;">SIGN</span>
<span style="position:absolute;white-space:nowrap;font-size:14px;line-height:20px;color:#fff;transform:scaleX(0.8786);transform-origin:0 0;left:664.10px;top:436.00px;">OFF</span>
<span style="position:absolute;white-space:nowrap;font-size:14px;line-height:20px;color:#fff;transform:scaleX(0.8961);transform-origin:0 0;left:778.30px;top:436.00px;">ANGELENA</span>
<span style="position:absolute;white-space:nowrap;font-size:14px;line-height:20px;color:#fff;transform:scaleX(0.8679);transform-origin:0 0;left:968.30px;top:436.00px;">ABC</span>
<span style="position:absolute;white-space:nowrap;font-size:14px;line-height:20px;color:#fff;transform:scaleX(0.9600);transform-origin:0 0;left:998.20px;top:436.00px;">COMPANY</span>
<span style="position:absolute;white-space:nowrap;font-size:14px;line-height:20px;color:#fff;transform:scaleX(0.8679);transform-origin:0 0;left:1374.50px;top:436.00px;">ABC</span>
<span style="position:absolute;white-space:nowrap;font-size:14px;line-height:20px;color:#fff;transform:scaleX(0.9600);transform-origin:0 0;left:1404.40px;top:436.00px;">COMPANY</span>
<span style="position:absolute;white-space:nowrap;font-size:14px;line-height:20px;color:#fff;transform:scaleX(1.0174);transform-origin:0 0;left:209.38px;top:468.00px;">N/A</span>
<span style="position:absolute;white-space:nowrap;font-size:14px;line-height:20px;color:#fff;transform:scaleX(0.9700);transform-origin:0 0;left:388.63px;top:468.00px;">PS-61</span>
<span style="position:absolute;white-space:nowrap;font-size:14px;line-height:20px;color:#fff;transform:scaleX(0.9700);transform-origin:0 0;left:579.10px;top:468.00px;">test</span>
<span style="position:absolute;white-space:nowrap;font-size:14px;line-height:20px;color:#fff;transform:scaleX(0.8961);transform-origin:0 0;left:778.30px;top:468.00px;">ANGELENA</span>
<span style="position:absolute;white-space:nowrap;font-size:14px;line-height:20px;color:#fff;transform:scaleX(0.8679);transform-origin:0 0;left:968.30px;top:468.00px;">ABC</span>
<span style="position:absolute;white-space:nowrap;font-size:14px;line-height:20px;color:#fff;transform:scaleX(0.9600);transform-origin:0 0;left:998.20px;top:468.00px;">COMPANY</span>
<span style="position:absolute;white-space:nowrap;font-size:14px;line-height:20px;color:#fff;transform:scaleX(0.8679);transform-origin:0 0;left:1374.50px;top:468.00px;">ABC</span>
<span style="position:absolute;white-space:nowrap;font-size:14px;line-height:20px;color:#fff;transform:scaleX(0.9600);transform-origin:0 0;left:1404.40px;top:468.00px;">COMPANY</span>
<span style="position:absolute;white-space:nowrap;font-size:14px;line-height:20px;color:#fff;transform:scaleX(0.8679);transform-origin:0 0;left:210.40px;top:500.00px;">ABC</span>
<span style="position:absolute;white-space:nowrap;font-size:14px;line-height:20px;color:#fff;transform:scaleX(0.9600);transform-origin:0 0;left:240.30px;top:500.00px;">COMPANY</span>
<span style="position:absolute;white-space:nowrap;font-size:14px;line-height:20px;color:#fff;transform:scaleX(0.9700);transform-origin:0 0;left:389.60px;top:500.00px;">248</span>
<span style="position:absolute;white-space:nowrap;font-size:14px;line-height:20px;color:#fff;transform:scaleX(0.9700);transform-origin:0 0;left:579.10px;top:500.00px;">Cert Sign Off</span>
<span style="position:absolute;white-space:nowrap;font-size:14px;line-height:20px;color:#fff;transform:scaleX(0.8961);transform-origin:0 0;left:778.30px;top:500.00px;">ANGELENA</span>
<span style="position:absolute;white-space:nowrap;font-size:14px;line-height:20px;color:#fff;transform:scaleX(0.8679);transform-origin:0 0;left:968.30px;top:500.00px;">ABC</span>
<span style="position:absolute;white-space:nowrap;font-size:14px;line-height:20px;color:#fff;transform:scaleX(0.9600);transform-origin:0 0;left:998.20px;top:500.00px;">COMPANY</span>
<span style="position:absolute;white-space:nowrap;font-size:14px;line-height:20px;color:#fff;transform:scaleX(0.8679);transform-origin:0 0;left:1374.50px;top:500.00px;">ABC</span>
<span style="position:absolute;white-space:nowrap;font-size:14px;line-height:20px;color:#fff;transform:scaleX(0.9600);transform-origin:0 0;left:1404.40px;top:500.00px;">COMPANY</span>
<span style="position:absolute;white-space:nowrap;font-size:14px;line-height:20px;color:#fff;transform:scaleX(1.0174);transform-origin:0 0;left:209.38px;top:532.00px;">N/A</span>
<span style="position:absolute;white-space:nowrap;font-size:14px;line-height:20px;color:#fff;transform:scaleX(0.9700);transform-origin:0 0;left:389.60px;top:532.00px;">63</span>
<span style="position:absolute;white-space:nowrap;font-size:14px;line-height:20px;color:#fff;transform:scaleX(1.0182);transform-origin:0 0;left:579.10px;top:532.00px;">ADMIN</span>
<span style="position:absolute;white-space:nowrap;font-size:14px;line-height:20px;color:#fff;transform:scaleX(0.9156);transform-origin:0 0;left:628.58px;top:532.00px;">SIGN</span>
<span style="position:absolute;white-space:nowrap;font-size:14px;line-height:20px;color:#fff;transform:scaleX(0.8786);transform-origin:0 0;left:664.10px;top:532.00px;">OFF</span>
<span style="position:absolute;white-space:nowrap;font-size:14px;line-height:20px;color:#fff;transform:scaleX(0.8961);transform-origin:0 0;left:778.30px;top:532.00px;">ANGELENA</span>
<span style="position:absolute;white-space:nowrap;font-size:14px;line-height:20px;color:#fff;transform:scaleX(0.8679);transform-origin:0 0;left:968.30px;top:532.00px;">ABC</span>
<span style="position:absolute;white-space:nowrap;font-size:14px;line-height:20px;color:#fff;transform:scaleX(0.9600);transform-origin:0 0;left:998.20px;top:532.00px;">COMPANY</span>
<span style="position:absolute;white-space:nowrap;font-size:14px;line-height:20px;color:#fff;transform:scaleX(0.8679);transform-origin:0 0;left:1374.50px;top:532.00px;">ABC</span>
<span style="position:absolute;white-space:nowrap;font-size:14px;line-height:20px;color:#fff;transform:scaleX(0.9600);transform-origin:0 0;left:1404.40px;top:532.00px;">COMPANY</span>
<span style="position:absolute;white-space:nowrap;font-size:14px;line-height:20px;color:#fff;transform:scaleX(1.0174);transform-origin:0 0;left:209.38px;top:564.00px;">N/A</span>
<span style="position:absolute;white-space:nowrap;font-size:14px;line-height:20px;color:#fff;transform:scaleX(0.9700);transform-origin:0 0;left:389.60px;top:564.00px;">64</span>
<span style="position:absolute;white-space:nowrap;font-size:14px;line-height:20px;color:#fff;transform:scaleX(1.0182);transform-origin:0 0;left:579.10px;top:564.00px;">ADMIN</span>
<span style="position:absolute;white-space:nowrap;font-size:14px;line-height:20px;color:#fff;transform:scaleX(0.9156);transform-origin:0 0;left:628.58px;top:564.00px;">SIGN</span>
<span style="position:absolute;white-space:nowrap;font-size:14px;line-height:20px;color:#fff;transform:scaleX(0.8786);transform-origin:0 0;left:664.10px;top:564.00px;">OFF</span>
<span style="position:absolute;white-space:nowrap;font-size:14px;line-height:20px;color:#fff;transform:scaleX(0.8961);transform-origin:0 0;left:778.30px;top:564.00px;">ANGELENA</span>
<span style="position:absolute;white-space:nowrap;font-size:14px;line-height:20px;color:#fff;transform:scaleX(0.8679);transform-origin:0 0;left:968.30px;top:564.00px;">ABC</span>
<span style="position:absolute;white-space:nowrap;font-size:14px;line-height:20px;color:#fff;transform:scaleX(0.9600);transform-origin:0 0;left:998.20px;top:564.00px;">COMPANY</span>
<span style="position:absolute;white-space:nowrap;font-size:14px;line-height:20px;color:#fff;transform:scaleX(0.8679);transform-origin:0 0;left:1374.50px;top:564.00px;">ABC</span>
<span style="position:absolute;white-space:nowrap;font-size:14px;line-height:20px;color:#fff;transform:scaleX(0.9600);transform-origin:0 0;left:1404.40px;top:564.00px;">COMPANY</span>
<span style="position:absolute;white-space:nowrap;font-size:14px;line-height:20px;color:#fff;transform:scaleX(1.0174);transform-origin:0 0;left:209.38px;top:596.00px;">N/A</span>
<span style="position:absolute;white-space:nowrap;font-size:14px;line-height:20px;color:#fff;transform:scaleX(0.9700);transform-origin:0 0;left:389.60px;top:596.00px;">65</span>
<span style="position:absolute;white-space:nowrap;font-size:14px;line-height:20px;color:#fff;transform:scaleX(1.0182);transform-origin:0 0;left:579.10px;top:596.00px;">ADMIN</span>
<span style="position:absolute;white-space:nowrap;font-size:14px;line-height:20px;color:#fff;transform:scaleX(0.9156);transform-origin:0 0;left:628.58px;top:596.00px;">SIGN</span>
<span style="position:absolute;white-space:nowrap;font-size:14px;line-height:20px;color:#fff;transform:scaleX(0.8786);transform-origin:0 0;left:664.10px;top:596.00px;">OFF</span>
<span style="position:absolute;white-space:nowrap;font-size:14px;line-height:20px;color:#fff;transform:scaleX(0.8961);transform-origin:0 0;left:778.30px;top:596.00px;">ANGELENA</span>
<span style="position:absolute;white-space:nowrap;font-size:14px;line-height:20px;color:#fff;transform:scaleX(0.8679);transform-origin:0 0;left:968.30px;top:596.00px;">ABC</span>
<span style="position:absolute;white-space:nowrap;font-size:14px;line-height:20px;color:#fff;transform:scaleX(0.9600);transform-origin:0 0;left:998.20px;top:596.00px;">COMPANY</span>
<span style="position:absolute;white-space:nowrap;font-size:14px;line-height:20px;color:#fff;transform:scaleX(0.8679);transform-origin:0 0;left:1374.50px;top:596.00px;">ABC</span>
<span style="position:absolute;white-space:nowrap;font-size:14px;line-height:20px;color:#fff;transform:scaleX(0.9600);transform-origin:0 0;left:1404.40px;top:596.00px;">COMPANY</span>
<span style="position:absolute;white-space:nowrap;font-size:14px;line-height:20px;color:#fff;transform:scaleX(0.8679);transform-origin:0 0;left:210.40px;top:628.00px;">ABC</span>
<span style="position:absolute;white-space:nowrap;font-size:14px;line-height:20px;color:#fff;transform:scaleX(0.9600);transform-origin:0 0;left:240.30px;top:628.00px;">COMPANY</span>
<span style="position:absolute;white-space:nowrap;font-size:14px;line-height:20px;color:#fff;transform:scaleX(0.9700);transform-origin:0 0;left:389.60px;top:628.00px;">253</span>
<span style="position:absolute;white-space:nowrap;font-size:14px;line-height:20px;color:#fff;transform:scaleX(0.9700);transform-origin:0 0;left:579.10px;top:628.00px;">Test Sign Off</span>
<span style="position:absolute;white-space:nowrap;font-size:14px;line-height:20px;color:#fff;transform:scaleX(0.8961);transform-origin:0 0;left:778.30px;top:628.00px;">ANGELENA</span>
<span style="position:absolute;white-space:nowrap;font-size:14px;line-height:20px;color:#fff;transform:scaleX(0.8679);transform-origin:0 0;left:968.30px;top:628.00px;">ABC</span>
<span style="position:absolute;white-space:nowrap;font-size:14px;line-height:20px;color:#fff;transform:scaleX(0.9600);transform-origin:0 0;left:998.20px;top:628.00px;">COMPANY</span>
<span style="position:absolute;white-space:nowrap;font-size:14px;line-height:20px;color:#fff;transform:scaleX(0.8679);transform-origin:0 0;left:1374.50px;top:628.00px;">ABC</span>
<span style="position:absolute;white-space:nowrap;font-size:14px;line-height:20px;color:#fff;transform:scaleX(0.9600);transform-origin:0 0;left:1404.40px;top:628.00px;">COMPANY</span>
<span style="position:absolute;white-space:nowrap;font-size:14px;line-height:20px;color:#fff;transform:scaleX(1.0174);transform-origin:0 0;left:209.38px;top:660.00px;">N/A</span>
<span style="position:absolute;white-space:nowrap;font-size:14px;line-height:20px;color:#fff;transform:scaleX(0.9700);transform-origin:0 0;left:389.60px;top:660.00px;">68</span>
<span style="position:absolute;white-space:nowrap;font-size:14px;line-height:20px;color:#fff;transform:scaleX(1.0182);transform-origin:0 0;left:579.10px;top:660.00px;">ADMIN</span>
<span style="position:absolute;white-space:nowrap;font-size:14px;line-height:20px;color:#fff;transform:scaleX(0.9156);transform-origin:0 0;left:628.58px;top:660.00px;">SIGN</span>
<span style="position:absolute;white-space:nowrap;font-size:14px;line-height:20px;color:#fff;transform:scaleX(0.8786);transform-origin:0 0;left:664.10px;top:660.00px;">OFF</span>
<span style="position:absolute;white-space:nowrap;font-size:14px;line-height:20px;color:#fff;transform:scaleX(0.8961);transform-origin:0 0;left:778.30px;top:660.00px;">ANGELENA</span>
<span style="position:absolute;white-space:nowrap;font-size:14px;line-height:20px;color:#fff;transform:scaleX(0.8679);transform-origin:0 0;left:968.30px;top:660.00px;">ABC</span>
<span style="position:absolute;white-space:nowrap;font-size:14px;line-height:20px;color:#fff;transform:scaleX(0.9600);transform-origin:0 0;left:998.20px;top:660.00px;">COMPANY</span>
<span style="position:absolute;white-space:nowrap;font-size:14px;line-height:20px;color:#fff;transform:scaleX(0.8679);transform-origin:0 0;left:1374.50px;top:660.00px;">ABC</span>
<span style="position:absolute;white-space:nowrap;font-size:14px;line-height:20px;color:#fff;transform:scaleX(0.9600);transform-origin:0 0;left:1404.40px;top:660.00px;">COMPANY</span>
<span style="position:absolute;white-space:nowrap;font-size:14px;line-height:20px;color:#fff;transform:scaleX(1.0174);transform-origin:0 0;left:209.38px;top:692.00px;">N/A</span>
<span style="position:absolute;white-space:nowrap;font-size:14px;line-height:20px;color:#fff;transform:scaleX(0.9700);transform-origin:0 0;left:389.60px;top:692.00px;">69</span>
<span style="position:absolute;white-space:nowrap;font-size:14px;line-height:20px;color:#fff;transform:scaleX(1.0182);transform-origin:0 0;left:579.10px;top:692.00px;">ADMIN</span>
<span style="position:absolute;white-space:nowrap;font-size:14px;line-height:20px;color:#fff;transform:scaleX(0.9156);transform-origin:0 0;left:628.58px;top:692.00px;">SIGN</span>
<span style="position:absolute;white-space:nowrap;font-size:14px;line-height:20px;color:#fff;transform:scaleX(0.8786);transform-origin:0 0;left:664.10px;top:692.00px;">OFF</span>
<span style="position:absolute;white-space:nowrap;font-size:14px;line-height:20px;color:#fff;transform:scaleX(0.8961);transform-origin:0 0;left:778.30px;top:692.00px;">ANGELENA</span>
<span style="position:absolute;white-space:nowrap;font-size:14px;line-height:20px;color:#fff;transform:scaleX(0.8679);transform-origin:0 0;left:968.30px;top:692.00px;">ABC</span>
<span style="position:absolute;white-space:nowrap;font-size:14px;line-height:20px;color:#fff;transform:scaleX(0.9600);transform-origin:0 0;left:998.20px;top:692.00px;">COMPANY</span>
<span style="position:absolute;white-space:nowrap;font-size:14px;line-height:20px;color:#fff;transform:scaleX(0.8679);transform-origin:0 0;left:1374.50px;top:692.00px;">ABC</span>
<span style="position:absolute;white-space:nowrap;font-size:14px;line-height:20px;color:#fff;transform:scaleX(0.9600);transform-origin:0 0;left:1404.40px;top:692.00px;">COMPANY</span>
<span style="position:absolute;white-space:nowrap;font-size:14px;line-height:20px;color:#fff;transform:scaleX(1.0174);transform-origin:0 0;left:209.38px;top:724.00px;">N/A</span>
<span style="position:absolute;white-space:nowrap;font-size:14px;line-height:20px;color:#fff;transform:scaleX(0.9700);transform-origin:0 0;left:389.60px;top:724.00px;">70</span>
<span style="position:absolute;white-space:nowrap;font-size:14px;line-height:20px;color:#fff;transform:scaleX(1.0182);transform-origin:0 0;left:579.10px;top:724.00px;">ADMIN</span>
<span style="position:absolute;white-space:nowrap;font-size:14px;line-height:20px;color:#fff;transform:scaleX(0.9156);transform-origin:0 0;left:628.58px;top:724.00px;">SIGN</span>
<span style="position:absolute;white-space:nowrap;font-size:14px;line-height:20px;color:#fff;transform:scaleX(0.8786);transform-origin:0 0;left:664.10px;top:724.00px;">OFF</span>
<span style="position:absolute;white-space:nowrap;font-size:14px;line-height:20px;color:#fff;transform:scaleX(0.8961);transform-origin:0 0;left:778.30px;top:724.00px;">ANGELENA</span>
<span style="position:absolute;white-space:nowrap;font-size:14px;line-height:20px;color:#fff;transform:scaleX(0.8679);transform-origin:0 0;left:968.30px;top:724.00px;">ABC</span>
<span style="position:absolute;white-space:nowrap;font-size:14px;line-height:20px;color:#fff;transform:scaleX(0.9600);transform-origin:0 0;left:998.20px;top:724.00px;">COMPANY</span>
<span style="position:absolute;white-space:nowrap;font-size:14px;line-height:20px;color:#fff;transform:scaleX(0.8679);transform-origin:0 0;left:1374.50px;top:724.00px;">ABC</span>
<span style="position:absolute;white-space:nowrap;font-size:14px;line-height:20px;color:#fff;transform:scaleX(0.9600);transform-origin:0 0;left:1404.40px;top:724.00px;">COMPANY</span>
<span style="position:absolute;white-space:nowrap;font-size:14px;line-height:20px;color:#fff;transform:scaleX(1.0174);transform-origin:0 0;left:209.38px;top:756.00px;">N/A</span>
<span style="position:absolute;white-space:nowrap;font-size:14px;line-height:20px;color:#fff;transform:scaleX(0.9700);transform-origin:0 0;left:389.60px;top:756.00px;">71</span>
<span style="position:absolute;white-space:nowrap;font-size:14px;line-height:20px;color:#fff;transform:scaleX(1.0182);transform-origin:0 0;left:579.10px;top:756.00px;">ADMIN</span>
<span style="position:absolute;white-space:nowrap;font-size:14px;line-height:20px;color:#fff;transform:scaleX(0.9156);transform-origin:0 0;left:628.58px;top:756.00px;">SIGN</span>
<span style="position:absolute;white-space:nowrap;font-size:14px;line-height:20px;color:#fff;transform:scaleX(0.8786);transform-origin:0 0;left:664.10px;top:756.00px;">OFF</span>
<span style="position:absolute;white-space:nowrap;font-size:14px;line-height:20px;color:#fff;transform:scaleX(0.8961);transform-origin:0 0;left:778.30px;top:756.00px;">ANGELENA</span>
<span style="position:absolute;white-space:nowrap;font-size:14px;line-height:20px;color:#fff;transform:scaleX(0.8679);transform-origin:0 0;left:968.30px;top:756.00px;">ABC</span>
<span style="position:absolute;white-space:nowrap;font-size:14px;line-height:20px;color:#fff;transform:scaleX(0.9600);transform-origin:0 0;left:998.20px;top:756.00px;">COMPANY</span>
<span style="position:absolute;white-space:nowrap;font-size:14px;line-height:20px;color:#fff;transform:scaleX(0.8679);transform-origin:0 0;left:1374.50px;top:756.00px;">ABC</span>
<span style="position:absolute;white-space:nowrap;font-size:14px;line-height:20px;color:#fff;transform:scaleX(0.9600);transform-origin:0 0;left:1404.40px;top:756.00px;">COMPANY</span>
<span style="position:absolute;white-space:nowrap;font-size:14px;line-height:20px;color:#fff;transform:scaleX(1.0174);transform-origin:0 0;left:209.38px;top:788.00px;">N/A</span>
<span style="position:absolute;white-space:nowrap;font-size:14px;line-height:20px;color:#fff;transform:scaleX(0.9700);transform-origin:0 0;left:389.60px;top:788.00px;">72</span>
<span style="position:absolute;white-space:nowrap;font-size:14px;line-height:20px;color:#fff;transform:scaleX(1.0182);transform-origin:0 0;left:579.10px;top:788.00px;">ADMIN</span>
<span style="position:absolute;white-space:nowrap;font-size:14px;line-height:20px;color:#fff;transform:scaleX(0.9156);transform-origin:0 0;left:628.58px;top:788.00px;">SIGN</span>
<span style="position:absolute;white-space:nowrap;font-size:14px;line-height:20px;color:#fff;transform:scaleX(0.8786);transform-origin:0 0;left:664.10px;top:788.00px;">OFF</span>
<span style="position:absolute;white-space:nowrap;font-size:14px;line-height:20px;color:#fff;transform:scaleX(0.8961);transform-origin:0 0;left:778.30px;top:788.00px;">ANGELENA</span>
<span style="position:absolute;white-space:nowrap;font-size:14px;line-height:20px;color:#fff;transform:scaleX(0.8679);transform-origin:0 0;left:968.30px;top:788.00px;">ABC</span>
<span style="position:absolute;white-space:nowrap;font-size:14px;line-height:20px;color:#fff;transform:scaleX(0.9600);transform-origin:0 0;left:998.20px;top:788.00px;">COMPANY</span>
<span style="position:absolute;white-space:nowrap;font-size:14px;line-height:20px;color:#fff;transform:scaleX(0.8679);transform-origin:0 0;left:1374.50px;top:788.00px;">ABC</span>
<span style="position:absolute;white-space:nowrap;font-size:14px;line-height:20px;color:#fff;transform:scaleX(0.9600);transform-origin:0 0;left:1404.40px;top:788.00px;">COMPANY</span>
<span style="position:absolute;white-space:nowrap;font-size:14px;line-height:20px;color:#fff;transform:scaleX(0.8679);transform-origin:0 0;left:210.40px;top:820.00px;">ABC</span>
<span style="position:absolute;white-space:nowrap;font-size:14px;line-height:20px;color:#fff;transform:scaleX(0.9600);transform-origin:0 0;left:240.30px;top:820.00px;">COMPANY</span>
<span style="position:absolute;white-space:nowrap;font-size:14px;line-height:20px;color:#fff;transform:scaleX(0.9700);transform-origin:0 0;left:389.60px;top:820.00px;">265</span>
<span style="position:absolute;white-space:nowrap;font-size:14px;line-height:20px;color:#fff;transform:scaleX(0.9700);transform-origin:0 0;left:579.10px;top:820.00px;">cert</span>
<span style="position:absolute;white-space:nowrap;font-size:14px;line-height:20px;color:#fff;transform:scaleX(0.8961);transform-origin:0 0;left:778.30px;top:820.00px;">ANGELENA</span>
<span style="position:absolute;white-space:nowrap;font-size:14px;line-height:20px;color:#fff;transform:scaleX(0.8679);transform-origin:0 0;left:968.30px;top:820.00px;">ABC</span>
<span style="position:absolute;white-space:nowrap;font-size:14px;line-height:20px;color:#fff;transform:scaleX(0.9600);transform-origin:0 0;left:998.20px;top:820.00px;">COMPANY</span>
<span style="position:absolute;white-space:nowrap;font-size:14px;line-height:20px;color:#fff;transform:scaleX(0.8679);transform-origin:0 0;left:1374.50px;top:820.00px;">ABC</span>
<span style="position:absolute;white-space:nowrap;font-size:14px;line-height:20px;color:#fff;transform:scaleX(0.9600);transform-origin:0 0;left:1404.40px;top:820.00px;">COMPANY</span>
<span style="position:absolute;white-space:nowrap;font-size:14px;line-height:20px;color:#fff;transform:scaleX(0.8679);transform-origin:0 0;left:210.40px;top:852.00px;">ABC</span>
<span style="position:absolute;white-space:nowrap;font-size:14px;line-height:20px;color:#fff;transform:scaleX(0.9600);transform-origin:0 0;left:240.30px;top:852.00px;">COMPANY</span>
<span style="position:absolute;white-space:nowrap;font-size:14px;line-height:20px;color:#fff;transform:scaleX(0.9700);transform-origin:0 0;left:389.60px;top:852.00px;">267</span>
<span style="position:absolute;white-space:nowrap;font-size:14px;line-height:20px;color:#fff;transform:scaleX(0.9700);transform-origin:0 0;left:579.10px;top:852.00px;">cert</span>
<span style="position:absolute;white-space:nowrap;font-size:14px;line-height:20px;color:#fff;transform:scaleX(0.8961);transform-origin:0 0;left:778.30px;top:852.00px;">ANGELENA</span>
<span style="position:absolute;white-space:nowrap;font-size:14px;line-height:20px;color:#fff;transform:scaleX(0.8679);transform-origin:0 0;left:968.30px;top:852.00px;">ABC</span>
<span style="position:absolute;white-space:nowrap;font-size:14px;line-height:20px;color:#fff;transform:scaleX(0.9600);transform-origin:0 0;left:998.20px;top:852.00px;">COMPANY</span>
<span style="position:absolute;white-space:nowrap;font-size:14px;line-height:20px;color:#fff;transform:scaleX(0.8679);transform-origin:0 0;left:1374.50px;top:852.00px;">ABC</span>
<span style="position:absolute;white-space:nowrap;font-size:14px;line-height:20px;color:#fff;transform:scaleX(0.9600);transform-origin:0 0;left:1404.40px;top:852.00px;">COMPANY</span>
<span style="position:absolute;white-space:nowrap;font-size:14px;line-height:20px;color:#fff;transform:scaleX(0.8679);transform-origin:0 0;left:210.40px;top:884.00px;">ABC</span>
<span style="position:absolute;white-space:nowrap;font-size:14px;line-height:20px;color:#fff;transform:scaleX(0.9600);transform-origin:0 0;left:240.30px;top:884.00px;">COMPANY</span>
<span style="position:absolute;white-space:nowrap;font-size:14px;line-height:20px;color:#fff;transform:scaleX(0.9700);transform-origin:0 0;left:389.60px;top:884.00px;">268</span>
<span style="position:absolute;white-space:nowrap;font-size:14px;line-height:20px;color:#fff;transform:scaleX(0.9700);transform-origin:0 0;left:579.10px;top:884.00px;">cert</span>
<span style="position:absolute;white-space:nowrap;font-size:14px;line-height:20px;color:#fff;transform:scaleX(0.8961);transform-origin:0 0;left:778.30px;top:884.00px;">ANGELENA</span>
<span style="position:absolute;white-space:nowrap;font-size:14px;line-height:20px;color:#fff;transform:scaleX(0.8679);transform-origin:0 0;left:968.30px;top:884.00px;">ABC</span>
<span style="position:absolute;white-space:nowrap;font-size:14px;line-height:20px;color:#fff;transform:scaleX(0.9600);transform-origin:0 0;left:998.20px;top:884.00px;">COMPANY</span>
<span style="position:absolute;white-space:nowrap;font-size:14px;line-height:20px;color:#fff;transform:scaleX(0.8679);transform-origin:0 0;left:1374.50px;top:884.00px;">ABC</span>
<span style="position:absolute;white-space:nowrap;font-size:14px;line-height:20px;color:#fff;transform:scaleX(0.9600);transform-origin:0 0;left:1404.40px;top:884.00px;">COMPANY</span>
<span style="position:absolute;white-space:nowrap;font-size:14px;line-height:20px;color:#fff;transform:scaleX(0.8679);transform-origin:0 0;left:210.40px;top:916.00px;">ABC</span>
<span style="position:absolute;white-space:nowrap;font-size:14px;line-height:20px;color:#fff;transform:scaleX(0.9600);transform-origin:0 0;left:240.30px;top:916.00px;">COMPANY</span>
<span style="position:absolute;white-space:nowrap;font-size:14px;line-height:20px;color:#fff;transform:scaleX(0.9700);transform-origin:0 0;left:389.60px;top:916.00px;">270</span>
<span style="position:absolute;white-space:nowrap;font-size:14px;line-height:20px;color:#fff;transform:scaleX(0.9700);transform-origin:0 0;left:579.10px;top:916.00px;">test</span>
<span style="position:absolute;white-space:nowrap;font-size:14px;line-height:20px;color:#fff;transform:scaleX(0.8961);transform-origin:0 0;left:778.30px;top:916.00px;">ANGELENA</span>
<span style="position:absolute;white-space:nowrap;font-size:14px;line-height:20px;color:#fff;transform:scaleX(0.8679);transform-origin:0 0;left:968.30px;top:916.00px;">ABC</span>
<span style="position:absolute;white-space:nowrap;font-size:14px;line-height:20px;color:#fff;transform:scaleX(0.9600);transform-origin:0 0;left:998.20px;top:916.00px;">COMPANY</span>
<span style="position:absolute;white-space:nowrap;font-size:14px;line-height:20px;color:#fff;transform:scaleX(0.8679);transform-origin:0 0;left:1374.50px;top:916.00px;">ABC</span>
<span style="position:absolute;white-space:nowrap;font-size:14px;line-height:20px;color:#fff;transform:scaleX(0.9600);transform-origin:0 0;left:1404.40px;top:916.00px;">COMPANY</span>
<div class="g" style="left:34px;top:0;width:161px;height:923px"><span style="position:absolute;white-space:nowrap;font-size:14px;line-height:20px;color:#fff;transform:scaleX(0.9367);transform-origin:0 0;left:5.86px;top:52.00px;">PACKING</span>
<span style="position:absolute;white-space:nowrap;font-size:14px;line-height:20px;color:#fff;transform:scaleX(0.8500);transform-origin:0 0;left:68.05px;top:52.00px;">SLIPS</span>
<span style="position:absolute;white-space:nowrap;font-size:14px;line-height:20px;color:#fff;transform:scaleX(0.9367);transform-origin:0 0;left:5.86px;top:84.00px;">PACKING</span>
<span style="position:absolute;white-space:nowrap;font-size:14px;line-height:20px;color:#fff;transform:scaleX(0.8500);transform-origin:0 0;left:68.05px;top:84.00px;">SLIPS</span>
<span style="position:absolute;white-space:nowrap;font-size:14px;line-height:20px;color:#fff;transform:scaleX(0.9659);transform-origin:0 0;left:5.83px;top:116.00px;">MULTI-EQUIP</span>
<span style="position:absolute;white-space:nowrap;font-size:14px;line-height:20px;color:#fff;transform:scaleX(0.8444);transform-origin:0 0;left:97.40px;top:116.00px;">CERTIFICATE</span>
<span style="position:absolute;white-space:nowrap;font-size:14px;line-height:20px;color:#fff;transform:scaleX(0.8000);transform-origin:0 0;left:6.80px;top:148.00px;">CERT</span>
<span style="position:absolute;white-space:nowrap;font-size:14px;line-height:20px;color:#fff;transform:scaleX(0.9659);transform-origin:0 0;left:5.83px;top:180.00px;">MULTI-EQUIP</span>
<span style="position:absolute;white-space:nowrap;font-size:14px;line-height:20px;color:#fff;transform:scaleX(0.8444);transform-origin:0 0;left:97.40px;top:180.00px;">CERTIFICATE</span>
<span style="position:absolute;white-space:nowrap;font-size:14px;line-height:20px;color:#fff;transform:scaleX(0.9367);transform-origin:0 0;left:5.86px;top:212.00px;">PACKING</span>
<span style="position:absolute;white-space:nowrap;font-size:14px;line-height:20px;color:#fff;transform:scaleX(0.8500);transform-origin:0 0;left:68.05px;top:212.00px;">SLIPS</span>
<span style="position:absolute;white-space:nowrap;font-size:14px;line-height:20px;color:#fff;transform:scaleX(0.9367);transform-origin:0 0;left:5.86px;top:244.00px;">PACKING</span>
<span style="position:absolute;white-space:nowrap;font-size:14px;line-height:20px;color:#fff;transform:scaleX(0.8500);transform-origin:0 0;left:68.05px;top:244.00px;">SLIPS</span>
<span style="position:absolute;white-space:nowrap;font-size:14px;line-height:20px;color:#fff;transform:scaleX(0.9367);transform-origin:0 0;left:5.86px;top:276.00px;">PACKING</span>
<span style="position:absolute;white-space:nowrap;font-size:14px;line-height:20px;color:#fff;transform:scaleX(0.8500);transform-origin:0 0;left:68.05px;top:276.00px;">SLIPS</span>
<span style="position:absolute;white-space:nowrap;font-size:14px;line-height:20px;color:#fff;transform:scaleX(0.9367);transform-origin:0 0;left:5.86px;top:308.00px;">PACKING</span>
<span style="position:absolute;white-space:nowrap;font-size:14px;line-height:20px;color:#fff;transform:scaleX(0.8500);transform-origin:0 0;left:68.05px;top:308.00px;">SLIPS</span>
<span style="position:absolute;white-space:nowrap;font-size:14px;line-height:20px;color:#fff;transform:scaleX(0.9367);transform-origin:0 0;left:5.86px;top:340.00px;">PACKING</span>
<span style="position:absolute;white-space:nowrap;font-size:14px;line-height:20px;color:#fff;transform:scaleX(0.8500);transform-origin:0 0;left:68.05px;top:340.00px;">SLIPS</span>
<span style="position:absolute;white-space:nowrap;font-size:14px;line-height:20px;color:#fff;transform:scaleX(0.9367);transform-origin:0 0;left:5.86px;top:372.00px;">PACKING</span>
<span style="position:absolute;white-space:nowrap;font-size:14px;line-height:20px;color:#fff;transform:scaleX(0.8500);transform-origin:0 0;left:68.05px;top:372.00px;">SLIPS</span>
<span style="position:absolute;white-space:nowrap;font-size:14px;line-height:20px;color:#fff;transform:scaleX(0.9367);transform-origin:0 0;left:5.86px;top:404.00px;">PACKING</span>
<span style="position:absolute;white-space:nowrap;font-size:14px;line-height:20px;color:#fff;transform:scaleX(0.8500);transform-origin:0 0;left:68.05px;top:404.00px;">SLIPS</span>
<span style="position:absolute;white-space:nowrap;font-size:14px;line-height:20px;color:#fff;transform:scaleX(0.9367);transform-origin:0 0;left:5.86px;top:436.00px;">PACKING</span>
<span style="position:absolute;white-space:nowrap;font-size:14px;line-height:20px;color:#fff;transform:scaleX(0.8500);transform-origin:0 0;left:68.05px;top:436.00px;">SLIPS</span>
<span style="position:absolute;white-space:nowrap;font-size:14px;line-height:20px;color:#fff;transform:scaleX(0.9367);transform-origin:0 0;left:5.86px;top:468.00px;">PACKING</span>
<span style="position:absolute;white-space:nowrap;font-size:14px;line-height:20px;color:#fff;transform:scaleX(0.8500);transform-origin:0 0;left:68.05px;top:468.00px;">SLIPS</span>
<span style="position:absolute;white-space:nowrap;font-size:14px;line-height:20px;color:#fff;transform:scaleX(0.8000);transform-origin:0 0;left:6.80px;top:500.00px;">CERT</span>
<span style="position:absolute;white-space:nowrap;font-size:14px;line-height:20px;color:#fff;transform:scaleX(0.9367);transform-origin:0 0;left:5.86px;top:532.00px;">PACKING</span>
<span style="position:absolute;white-space:nowrap;font-size:14px;line-height:20px;color:#fff;transform:scaleX(0.8500);transform-origin:0 0;left:68.05px;top:532.00px;">SLIPS</span>
<span style="position:absolute;white-space:nowrap;font-size:14px;line-height:20px;color:#fff;transform:scaleX(0.9367);transform-origin:0 0;left:5.86px;top:564.00px;">PACKING</span>
<span style="position:absolute;white-space:nowrap;font-size:14px;line-height:20px;color:#fff;transform:scaleX(0.8500);transform-origin:0 0;left:68.05px;top:564.00px;">SLIPS</span>
<span style="position:absolute;white-space:nowrap;font-size:14px;line-height:20px;color:#fff;transform:scaleX(0.9367);transform-origin:0 0;left:5.86px;top:596.00px;">PACKING</span>
<span style="position:absolute;white-space:nowrap;font-size:14px;line-height:20px;color:#fff;transform:scaleX(0.8500);transform-origin:0 0;left:68.05px;top:596.00px;">SLIPS</span>
<span style="position:absolute;white-space:nowrap;font-size:14px;line-height:20px;color:#fff;transform:scaleX(0.8000);transform-origin:0 0;left:6.80px;top:628.00px;">CERT</span>
<span style="position:absolute;white-space:nowrap;font-size:14px;line-height:20px;color:#fff;transform:scaleX(0.9367);transform-origin:0 0;left:5.86px;top:660.00px;">PACKING</span>
<span style="position:absolute;white-space:nowrap;font-size:14px;line-height:20px;color:#fff;transform:scaleX(0.8500);transform-origin:0 0;left:68.05px;top:660.00px;">SLIPS</span>
<span style="position:absolute;white-space:nowrap;font-size:14px;line-height:20px;color:#fff;transform:scaleX(0.9367);transform-origin:0 0;left:5.86px;top:692.00px;">PACKING</span>
<span style="position:absolute;white-space:nowrap;font-size:14px;line-height:20px;color:#fff;transform:scaleX(0.8500);transform-origin:0 0;left:68.05px;top:692.00px;">SLIPS</span>
<span style="position:absolute;white-space:nowrap;font-size:14px;line-height:20px;color:#fff;transform:scaleX(0.9367);transform-origin:0 0;left:5.86px;top:724.00px;">PACKING</span>
<span style="position:absolute;white-space:nowrap;font-size:14px;line-height:20px;color:#fff;transform:scaleX(0.8500);transform-origin:0 0;left:68.05px;top:724.00px;">SLIPS</span>
<span style="position:absolute;white-space:nowrap;font-size:14px;line-height:20px;color:#fff;transform:scaleX(0.9367);transform-origin:0 0;left:5.86px;top:756.00px;">PACKING</span>
<span style="position:absolute;white-space:nowrap;font-size:14px;line-height:20px;color:#fff;transform:scaleX(0.8500);transform-origin:0 0;left:68.05px;top:756.00px;">SLIPS</span>
<span style="position:absolute;white-space:nowrap;font-size:14px;line-height:20px;color:#fff;transform:scaleX(0.9367);transform-origin:0 0;left:5.86px;top:788.00px;">PACKING</span>
<span style="position:absolute;white-space:nowrap;font-size:14px;line-height:20px;color:#fff;transform:scaleX(0.8500);transform-origin:0 0;left:68.05px;top:788.00px;">SLIPS</span>
<span style="position:absolute;white-space:nowrap;font-size:14px;line-height:20px;color:#fff;transform:scaleX(0.8000);transform-origin:0 0;left:6.80px;top:820.00px;">CERT</span>
<span style="position:absolute;white-space:nowrap;font-size:14px;line-height:20px;color:#fff;transform:scaleX(0.8000);transform-origin:0 0;left:6.80px;top:852.00px;">CERT</span>
<span style="position:absolute;white-space:nowrap;font-size:14px;line-height:20px;color:#fff;transform:scaleX(0.8000);transform-origin:0 0;left:6.80px;top:884.00px;">CERT</span>
<span style="position:absolute;white-space:nowrap;font-size:14px;line-height:20px;color:#fff;transform:scaleX(0.8000);transform-origin:0 0;left:6.80px;top:916.00px;">CERT</span></div>
</div>
<div style="position:absolute;left:1196px;top:137px;width:213px;height:30px;background:#4c4c4c;border-radius:4px;border:1px solid #2c2c2c;box-sizing:border-box"></div>
<div style="position:absolute;left:1418px;top:137px;width:96px;height:30px;background:#4c4c4c;border-radius:4px;border:1px solid #2c2c2c;box-sizing:border-box"></div>
<div style="position:absolute;left:1523px;top:137px;width:111px;height:30px;background:#8a8a8a;border-radius:4px;border:2px solid #1fb9d9;box-sizing:border-box"></div>
<div style="position:absolute;left:1647px;top:137px;width:1px;height:30px;background:#2c2c2c;"></div>
<div style="position:absolute;left:1699px;top:139px;width:181px;height:26px;background:#6a6a6a;border-radius:4px;border:1px solid #2e2e2e;box-sizing:border-box"></div>
<svg style="left:0;top:130px" width="1910" height="45" viewBox="0 130 1910 45"><path d="M1436.3 147.4 A6.5 6.5 0 1 1 1434.55 153.3" fill="none" stroke="#fff" stroke-width="2.1"/><path d="M1433.2 143.6 L1433.7 151.4 L1441 149.6 Z" fill="#fff"/><circle cx="1541.5" cy="152.1" r="6.9" fill="none" stroke="#fff" stroke-width="1.6"/><rect x="1540.5" y="150.6" width="2" height="5.6" fill="#fff"/><rect x="1540.5" y="147.7" width="2" height="1.9" fill="#fff"/><path d="M1617 150.3 H1626.2 L1621.6 155.3 Z" fill="#fff"/><ellipse cx="1675" cy="148.2" rx="4" ry="5.2" fill="#fff"/><path d="M1666.9 160.6 V158 C1666.9 155.6 1669.5 155.2 1672 154 L1675 156.2 L1678 154 C1680.5 155.2 1683.1 155.6 1683.1 158 V160.6 Z" fill="#fff"/><rect x="1673" y="152" width="4" height="3" fill="#fff"/><path d="M1857 149.4 L1862 154.6 L1867 149.4" fill="none" stroke="#fff" stroke-width="1.3"/></svg>
<div style="position:absolute;left:1524px;top:167px;width:338px;height:100.8px;background:#3c3c3c;box-shadow:1px 1px 4px 1px rgba(0,0,0,.62), 0 0 0 0.6px #2c2c2c"></div>
<div style="position:absolute;left:1526px;top:267.8px;width:334px;height:1.3px;background:#292929;"></div>
<div style="position:absolute;left:1528px;top:170.4px;width:328.5px;height:29.6px;background:#343434;"></div>
<div style="position:absolute;left:1529.9px;top:172.6px;width:325.6px;height:25.6px;background:#606060;border-radius:3px"></div>
<svg style="left:1547px;top:180px" width="16" height="12" viewBox="0 0 16 12"><path d="M1 6.5 L5.5 10.6 L14.6 1.1" fill="none" stroke="#f4f4f4" stroke-width="1.6"/></svg>
<span style="position:absolute;white-space:nowrap;font-size:16.8px;line-height:23px;color:#fff;transform:scaleX(1.0274);transform-origin:0 0;left:1583.57px;top:175.00px;">Batch Document Sign-Offs</span>
<span style="position:absolute;white-space:nowrap;font-size:16.8px;line-height:23px;color:#fff;transform:scaleX(1.0151);transform-origin:0 0;left:1584.60px;top:207.00px;">View Sign-Off History</span>
<span style="position:absolute;white-space:nowrap;font-size:16.8px;line-height:23px;color:#fff;transform:scaleX(0.9951);transform-origin:0 0;left:1583.60px;top:239.00px;">Send Reminder Email</span>
<svg style="left:1796px;top:186px" width="16" height="24" viewBox="1796 186 16 24"><path d="M1798.2 188.8 L1798.2 205.6 L1801.9 202.3 L1804.4 208 L1807.2 206.8 L1804.7 201.2 L1809.4 200.9 Z" fill="#fff" stroke="#000" stroke-width="1.2" stroke-linejoin="round"/></svg>
<div style="position:absolute;left:1525px;top:167.4px;width:334.5px;height:35.6px;background:transparent;border-radius:5.5px;border:4px solid #7d69f0;box-sizing:border-box"></div>
<span style="position:absolute;white-space:nowrap;font-size:18.6px;line-height:25px;color:#fff;transform:scaleX(1.0090);transform-origin:0 0;left:23.19px;top:6.00px;">IndySoft</span>
<span style="position:absolute;white-space:nowrap;font-size:18.6px;line-height:25px;color:#fff;transform:scaleX(1.1500);transform-origin:0 0;left:96.75px;top:6.00px;">-</span>
<span style="position:absolute;white-space:nowrap;font-size:18.6px;line-height:25px;color:#fff;transform:scaleX(0.9198);transform-origin:0 0;left:110.50px;top:6.00px;">ANGELENA</span>
<span style="position:absolute;white-space:nowrap;font-size:18.6px;line-height:25px;color:#fff;transform:scaleX(0.9507);transform-origin:0 0;left:209.35px;top:6.00px;">(Session:</span>
<span style="position:absolute;white-space:nowrap;font-size:18.6px;line-height:25px;color:#fff;transform:scaleX(0.9731);transform-origin:0 0;left:287.70px;top:6.00px;">#856108)</span>
<span style="position:absolute;white-space:nowrap;font-size:29.6px;line-height:37px;color:#fff;transform:scaleX(0.9585);transform-origin:0 0;left:120.08px;top:67.00px;">Branch Manager</span>
<span style="position:absolute;white-space:nowrap;font-size:14px;line-height:20px;color:#fff;left:34.60px;top:171.00px;">Home</span>
<span style="position:absolute;white-space:nowrap;font-size:14px;line-height:20px;color:#fff;transform:scaleX(0.9833);transform-origin:0 0;left:24.00px;top:242.00px;">Company</span>
<span style="position:absolute;white-space:nowrap;font-size:14px;line-height:20px;color:#fff;transform:scaleX(0.9879);transform-origin:0 0;left:19.41px;top:313.00px;">Equipment</span>
<span style="position:absolute;white-space:nowrap;font-size:14px;line-height:20px;color:#fff;transform:scaleX(0.9736);transform-origin:0 0;left:10.33px;top:384.00px;">Pending Work</span>
<span style="position:absolute;white-space:nowrap;font-size:14px;line-height:20px;color:#fff;font-weight:bold;transform:scaleX(0.9766);transform-origin:0 0;left:29.22px;top:455.00px;">Branch</span>
<span style="position:absolute;white-space:nowrap;font-size:14px;line-height:20px;color:#fff;font-weight:bold;transform:scaleX(1.0509);transform-origin:0 0;left:22.05px;top:474.00px;">Manager</span>
<span style="position:absolute;white-space:nowrap;font-size:14px;line-height:20px;color:#fff;transform:scaleX(0.9698);transform-origin:0 0;left:11.30px;top:545.00px;">Order System</span>
<span style="position:absolute;white-space:nowrap;font-size:14px;line-height:20px;color:#fff;left:26.90px;top:616.00px;">Add/Edit</span>
<span style="position:absolute;white-space:nowrap;font-size:14px;line-height:20px;color:#fff;transform:scaleX(0.9712);transform-origin:0 0;left:23.23px;top:687.00px;">Locations</span>
<span style="position:absolute;white-space:nowrap;font-size:14px;line-height:20px;color:#fff;transform:scaleX(0.9771);transform-origin:0 0;left:29.12px;top:758.00px;">Reports</span>
<span style="position:absolute;white-space:nowrap;font-size:14px;line-height:20px;color:#fff;font-weight:bold;transform:scaleX(0.9841);transform-origin:0 0;left:120.00px;top:147.00px;">Sign-Offs</span>
<span style="position:absolute;white-space:nowrap;font-size:14px;line-height:20px;color:#fff;font-weight:bold;transform:scaleX(1.0307);transform-origin:0 0;left:120.00px;top:294.00px;">Template Management</span>
<span style="position:absolute;white-space:nowrap;font-size:14px;line-height:20px;color:#fff;font-weight:bold;left:120.00px;top:441.00px;">Other</span>
<span style="position:absolute;white-space:nowrap;font-size:15.2px;line-height:21px;color:#fff;transform:scaleX(0.9867);transform-origin:0 0;left:130.81px;top:200.00px;">Document Sign-Offs (32)</span>
<span style="position:absolute;white-space:nowrap;font-size:15.2px;line-height:21px;color:#fff;transform:scaleX(0.9618);transform-origin:0 0;left:130.84px;top:236.00px;">Event Sign-Offs (34)</span>
<span style="position:absolute;white-space:nowrap;font-size:15.2px;line-height:21px;color:#fff;transform:scaleX(0.9738);transform-origin:0 0;left:131.60px;top:347.00px;">Template Assignments (181)</span>
<span style="position:absolute;white-space:nowrap;font-size:15.2px;line-height:21px;color:#fff;left:131.60px;top:383.00px;">Template Approvals</span>
<span style="position:absolute;white-space:nowrap;font-size:15.2px;line-height:21px;color:#fff;transform:scaleX(0.9220);transform-origin:0 0;left:131.40px;top:494.00px;">Vendor POs</span>
<span style="position:absolute;white-space:nowrap;font-size:15.2px;line-height:21px;color:#fff;transform:scaleX(0.9350);transform-origin:0 0;left:130.66px;top:530.00px;">Service Requests (2)</span>
<span style="position:absolute;white-space:nowrap;font-size:14.4px;line-height:20px;color:#fff;font-weight:bold;left:454.60px;top:142.00px;">Pending Document Sign-Offs</span>
<span style="position:absolute;white-space:nowrap;font-size:12.8px;line-height:19px;color:#fff;left:1215.80px;top:143.00px;">Batch Sign-Off Selected Items</span>
<span style="position:absolute;white-space:nowrap;font-size:12.8px;line-height:19px;color:#fff;left:1455.60px;top:143.00px;">Refresh</span>
<span style="position:absolute;white-space:nowrap;font-size:12.8px;line-height:19px;color:#fff;transform:scaleX(0.9857);transform-origin:0 0;left:1557.00px;top:143.00px;">Actions</span>
<span style="position:absolute;white-space:nowrap;font-size:12.8px;line-height:19px;color:#fff;transform:scaleX(0.9171);transform-origin:0 0;left:1702.40px;top:143.00px;">ANGELENA</span>
<span style="position:absolute;white-space:nowrap;font-size:14px;line-height:20px;color:#fff;transform:scaleX(0.9000);transform-origin:0 0;left:1741.20px;top:49.00px;">ANGELENA</span>
<span style="position:absolute;white-space:nowrap;font-size:14px;line-height:20px;color:#fff;transform:scaleX(1.0076);transform-origin:0 0;left:1676.99px;top:74.00px;">System Administrator</span>
<span style="position:absolute;white-space:nowrap;font-size:14px;line-height:20px;color:#fff;font-weight:bold;transform:scaleX(0.9538);transform-origin:0 0;left:1771.85px;top:99.00px;">DARK</span>
</body></html>
